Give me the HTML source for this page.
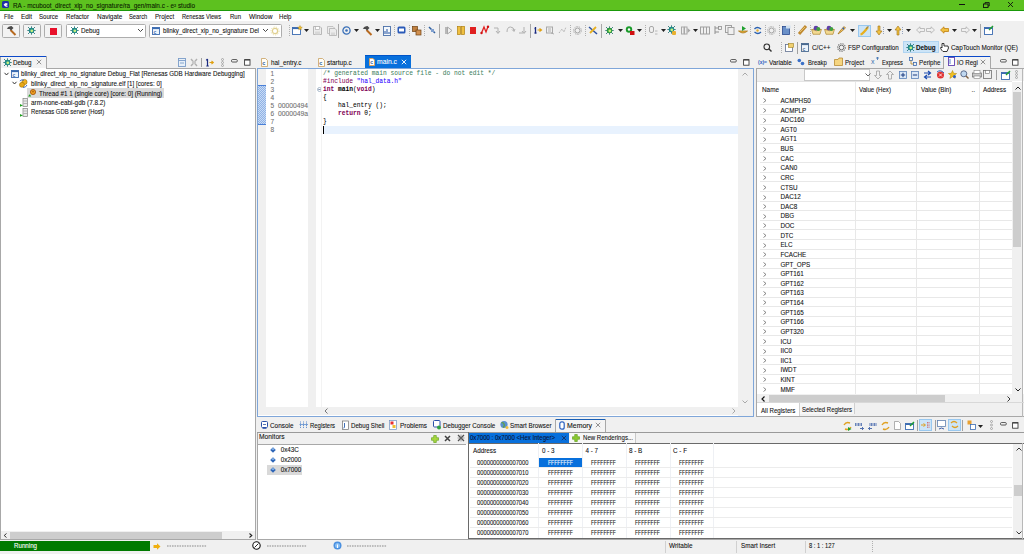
<!DOCTYPE html>
<html><head><meta charset="utf-8"><style>
html,body{margin:0;padding:0;}
body{width:1024px;height:554px;overflow:hidden;position:relative;background:#f0f0f0;font-family:'Liberation Sans', sans-serif;}
.a{position:absolute;}
.t{position:absolute;white-space:pre;-webkit-text-stroke-width:0.08px;line-height:10px;height:10px;}
svg.a{overflow:visible;}
</style></head><body>
<div class="a" style="left:0px;top:0px;width:1024px;height:10px;background:#5dc11f;"></div><div class="a" style="left:0px;top:10px;width:1024px;height:1px;background:#1a9a0a;"></div><div class="a" style="left:0px;top:11px;width:1024px;height:10px;background:#ffffff;"></div><div class="a" style="left:2px;top:1px;width:7px;height:7px;background:#1f2fa8;border-radius:1.5px;"></div><svg class="a" style="left:2px;top:1px" width="7" height="7" viewBox="0 0 7 7"><path d="M2 4 Q3.5 2 5 3 L3 4.5 Q4 5.5 5.5 5" stroke="#fff" stroke-width="1.1" fill="none"/></svg><div class="t" style="left:13px;top:0.7000000000000002px;font-size:6.3px;color:#0a1a00;transform:scaleX(1.0112);transform-origin:0 50%;">RA - mcuboot_direct_xip_no_signature/ra_gen/main.c - e² studio</div><div class="a" style="left:959px;top:4px;width:6px;height:1px;background:#111;"></div><svg class="a" style="left:982px;top:1px" width="9" height="8" viewBox="0 0 9 8"><rect x="1.5" y="3" width="4.5" height="3.5" fill="none" stroke="#111" stroke-width="0.9"/><path d="M3 3 V1.6 H7.2 V5 H6" fill="none" stroke="#111" stroke-width="0.9"/></svg><svg class="a" style="left:1007px;top:1px" width="7" height="7" viewBox="0 0 7 7"><path d="M1 1 L6 6 M6 1 L1 6" stroke="#111" stroke-width="0.9"/></svg><div class="t" style="left:4px;top:11.8px;font-size:6.3px;color:#111;transform:scaleX(0.9260);transform-origin:0 50%;">File</div><div class="t" style="left:20.5px;top:11.8px;font-size:6.3px;color:#111;transform:scaleX(1.0133);transform-origin:0 50%;">Edit</div><div class="t" style="left:38.8px;top:11.8px;font-size:6.3px;color:#111;transform:scaleX(0.9619);transform-origin:0 50%;">Source</div><div class="t" style="left:65.9px;top:11.8px;font-size:6.3px;color:#111;transform:scaleX(0.9661);transform-origin:0 50%;">Refactor</div><div class="t" style="left:96.6px;top:11.8px;font-size:6.3px;color:#111;transform:scaleX(1.0216);transform-origin:0 50%;">Navigate</div><div class="t" style="left:128.8px;top:11.8px;font-size:6.3px;color:#111;transform:scaleX(0.9118);transform-origin:0 50%;">Search</div><div class="t" style="left:155px;top:11.8px;font-size:6.3px;color:#111;transform:scaleX(0.9742);transform-origin:0 50%;">Project</div><div class="t" style="left:182px;top:11.8px;font-size:6.3px;color:#111;transform:scaleX(0.9006);transform-origin:0 50%;">Renesas Views</div><div class="t" style="left:230px;top:11.8px;font-size:6.3px;color:#111;transform:scaleX(0.9518);transform-origin:0 50%;">Run</div><div class="t" style="left:249px;top:11.8px;font-size:6.3px;color:#111;transform:scaleX(1.0443);transform-origin:0 50%;">Window</div><div class="t" style="left:279px;top:11.8px;font-size:6.3px;color:#111;transform:scaleX(0.9648);transform-origin:0 50%;">Help</div><div class="a" style="left:2px;top:24px;width:18px;height:14px;background:#f3f3f3;border:1px solid #adadad;box-sizing:border-box;border-radius:1.5px;"></div><div class="a" style="left:23px;top:24px;width:18px;height:14px;background:#f3f3f3;border:1px solid #adadad;box-sizing:border-box;border-radius:1.5px;"></div><div class="a" style="left:44px;top:24px;width:18px;height:14px;background:#f3f3f3;border:1px solid #adadad;box-sizing:border-box;border-radius:1.5px;"></div><svg class="a" style="left:6px;top:25px" width="11" height="11" viewBox="0 0 11 11"><path d="M4.5 5 L9.5 10" stroke="#b86a20" stroke-width="2"/><path d="M0.8 3.5 Q2.5 0.8 5.5 1 L7.5 3 L5 5.5 L3.5 4 Q2 4 0.8 3.5 Z" fill="#4a4a4a"/></svg><svg class="a" style="left:27px;top:26px" width="9" height="9" viewBox="0 0 9 9"><path d="M1 1 L3 3 M8 1 L6 3 M1 8 L3 6 M8 8 L6 6 M0.3 4.5 H2 M7 4.5 H8.7 M4.5 0.3 V2 M4.5 7 V8.7" stroke="#1a6a6a" stroke-width="0.8"/><circle cx="4.5" cy="4.5" r="2.7" fill="#1f8a8a"/><circle cx="4.8" cy="4.8" r="1.4" fill="#c8f080"/></svg><div class="a" style="left:50px;top:28px;width:6.5px;height:6.5px;background:#e8102a;"></div><div class="a" style="left:66px;top:24px;width:80px;height:14px;background:#fff;border:1px solid #adadad;box-sizing:border-box;border-radius:1.5px;"></div><svg class="a" style="left:70px;top:26px" width="9" height="9" viewBox="0 0 9 9"><path d="M1 1 L3 3 M8 1 L6 3 M1 8 L3 6 M8 8 L6 6 M0.3 4.5 H2 M7 4.5 H8.7 M4.5 0.3 V2 M4.5 7 V8.7" stroke="#1a6a6a" stroke-width="0.8"/><circle cx="4.5" cy="4.5" r="2.7" fill="#1f8a8a"/><circle cx="4.8" cy="4.8" r="1.4" fill="#c8f080"/></svg><div class="t" style="left:81px;top:26px;font-size:6.3px;color:#111;">Debug</div><svg class="a" style="left:137px;top:28px" width="7" height="5" viewBox="0 0 7 5"><path d="M1 1 L3.5 3.5 L6 1" stroke="#333" stroke-width="0.9" fill="none"/></svg><div class="a" style="left:149px;top:24px;width:133px;height:14px;background:#fff;border:1px solid #adadad;box-sizing:border-box;border-radius:1.5px;"></div><svg class="a" style="left:152px;top:27px" width="8" height="8" viewBox="0 0 8 8"><rect x="0.5" y="0.5" width="7" height="7" fill="#eef4fb" stroke="#3a6ab0" stroke-width="0.9"/><rect x="0.5" y="0.5" width="7" height="1.6" fill="#3a6ab0"/><text x="1.6" y="6.5" font-size="5" font-family="Liberation Sans" fill="#3a6ab0" font-weight="bold">c</text></svg><div class="t" style="left:163px;top:26px;font-size:6.3px;color:#111;transform:scaleX(0.9826);transform-origin:0 50%;">blinky_direct_xip_no_signature Del</div><svg class="a" style="left:262px;top:28px" width="7" height="5" viewBox="0 0 7 5"><path d="M1 1 L3.5 3.5 L6 1" stroke="#333" stroke-width="0.9" fill="none"/></svg><svg class="a" style="left:270px;top:26px" width="10" height="10" viewBox="0 0 10 10"><circle cx="5" cy="5" r="2.6" fill="none" stroke="#e0d090" stroke-width="1.2"/><circle cx="5" cy="5" r="4" fill="none" stroke="#e8dca0" stroke-width="1" stroke-dasharray="1.2 1.2"/></svg><svg class="a" style="left:289px;top:25px" width="1" height="12" viewBox="0 0 1 12"><line x1="0.5" y1="0" x2="0.5" y2="12" stroke="#b0b0b0" stroke-width="1" stroke-dasharray="1 1"/></svg><svg class="a" style="left:292px;top:25px" width="11" height="11" viewBox="0 0 11 11"><rect x="0.5" y="2.5" width="8" height="7" fill="#fff" stroke="#3a6ab0" stroke-width="0.9"/><rect x="0.5" y="2.5" width="8" height="1.6" fill="#3a6ab0"/><path d="M8 0.5 L8.7 2 L10.3 2.3 L9 3.3 L9.3 4.8 L8 4 L6.7 4.8 L7 3.3 L5.7 2.3 L7.3 2 Z" fill="#f0c030" stroke="#b08010" stroke-width="0.4"/></svg><svg class="a" style="left:304px;top:29px" width="5" height="3" viewBox="0 0 5 3"><path d="M0 0 H5 L2.5 3 Z" fill="#222"/></svg><svg class="a" style="left:313px;top:26px" width="9" height="9" viewBox="0 0 9 9"><path d="M0.5 0.5 H7 L8.5 2 V8.5 H0.5 Z" fill="#ececec" stroke="#b0b0b0" stroke-width="0.9"/><rect x="2.5" y="0.5" width="4" height="3" fill="#fff" stroke="#b0b0b0" stroke-width="0.7"/><rect x="2" y="5.5" width="5" height="3" fill="#d8d8d8"/></svg><svg class="a" style="left:327px;top:26px" width="10" height="10" viewBox="0 0 10 10"><path d="M0.5 0.5 H6 L7.5 2 V7.5 H0.5 Z" fill="#ececec" stroke="#b8b8b8" stroke-width="0.8"/><path d="M2.5 2.5 H8 L9.5 4 V9.5 H2.5 Z" fill="#ececec" stroke="#b0b0b0" stroke-width="0.8"/><rect x="4" y="6.5" width="4" height="2.5" fill="#d8d8d8"/></svg><div class="a" style="left:338px;top:24px;width:1px;height:14px;background:#a8a8a8;"></div><svg class="a" style="left:342px;top:26px" width="9" height="9" viewBox="0 0 9 9"><circle cx="4.5" cy="4.5" r="3.6" fill="none" stroke="#3a70b8" stroke-width="1.3"/><circle cx="4.5" cy="4.5" r="1.3" fill="#3a70b8"/></svg><svg class="a" style="left:354px;top:29px" width="5" height="3" viewBox="0 0 5 3"><path d="M0 0 H5 L2.5 3 Z" fill="#222"/></svg><svg class="a" style="left:362px;top:25px" width="11" height="11" viewBox="0 0 11 11"><path d="M4.5 5 L9.5 10" stroke="#b86a20" stroke-width="2"/><path d="M0.8 3.5 Q2.5 0.8 5.5 1 L7.5 3 L5 5.5 L3.5 4 Q2 4 0.8 3.5 Z" fill="#4a4a4a"/></svg><svg class="a" style="left:375px;top:29px" width="5" height="3" viewBox="0 0 5 3"><path d="M0 0 H5 L2.5 3 Z" fill="#222"/></svg><svg class="a" style="left:383px;top:26px" width="8" height="10" viewBox="0 0 8 10"><rect x="0.5" y="0.5" width="7" height="9" fill="#f4f8fc" stroke="#4a70a8" stroke-width="0.9"/><path d="M2 8 V5 M4 8 V3 M6 8 V6" stroke="#2050a0" stroke-width="1"/></svg><svg class="a" style="left:394px;top:25px" width="1" height="12" viewBox="0 0 1 12"><line x1="0.5" y1="0" x2="0.5" y2="12" stroke="#b0b0b0" stroke-width="1" stroke-dasharray="1 1"/></svg><svg class="a" style="left:397px;top:26px" width="9" height="9" viewBox="0 0 9 9"><rect x="0.5" y="0.5" width="8" height="7" rx="1.5" fill="#2a5ab8"/><rect x="2" y="2.5" width="5" height="3" fill="#fff"/></svg><svg class="a" style="left:409px;top:25px" width="1" height="12" viewBox="0 0 1 12"><line x1="0.5" y1="0" x2="0.5" y2="12" stroke="#b0b0b0" stroke-width="1" stroke-dasharray="1 1"/></svg><svg class="a" style="left:412px;top:26px" width="10" height="10" viewBox="0 0 10 10"><rect x="0.5" y="0.5" width="5" height="5" fill="#c08040" stroke="#704010" stroke-width="0.7"/><rect x="4" y="4" width="5" height="5" fill="#d09050" stroke="#704010" stroke-width="0.7"/></svg><svg class="a" style="left:424px;top:25px" width="1" height="12" viewBox="0 0 1 12"><line x1="0.5" y1="0" x2="0.5" y2="12" stroke="#b0b0b0" stroke-width="1" stroke-dasharray="1 1"/></svg><svg class="a" style="left:428px;top:26px" width="8" height="9" viewBox="0 0 8 9"><path d="M1 1 L7 7" stroke="#3060a0" stroke-width="1.5"/><rect x="3" y="3" width="3" height="3" fill="#80a0d0"/></svg><div class="a" style="left:439px;top:24px;width:1px;height:14px;background:#a8a8a8;"></div><svg class="a" style="left:444px;top:26px" width="9" height="9" viewBox="0 0 9 9"><path d="M1 1 H3 V8 H1 Z" fill="#b8b8b8"/><path d="M3.5 1 L8 4.5 L3.5 8 Z" fill="none" stroke="#a8a8a8" stroke-width="1"/></svg><svg class="a" style="left:457px;top:26px" width="8" height="9" viewBox="0 0 8 9"><rect x="0.5" y="0.5" width="3" height="8" fill="#f0c040" stroke="#b08010" stroke-width="0.7"/><rect x="4.5" y="0.5" width="3" height="8" fill="#f0c040" stroke="#b08010" stroke-width="0.7"/></svg><div class="a" style="left:470px;top:27px;width:6px;height:7px;background:#e02020;"></div><svg class="a" style="left:480px;top:25px" width="9" height="10" viewBox="0 0 9 10"><path d="M1.5 8 L4 2 L6 7 L8 1.5" stroke="#e02020" stroke-width="1.3" fill="none"/><circle cx="1.5" cy="8" r="1.2" fill="#d01010"/><circle cx="8" cy="1.8" r="1.2" fill="#d01010"/></svg><svg class="a" style="left:493px;top:26px" width="8" height="9" viewBox="0 0 8 9"><path d="M1 2 H5 V7 M3 5 L5 7.5 L7 5" stroke="#b0b0b0" stroke-width="1" fill="none"/></svg><svg class="a" style="left:506px;top:26px" width="8" height="9" viewBox="0 0 8 9"><path d="M1 6 Q1 1 4.5 1 Q8 1 8 5 M6 3.5 L8 5.5 L9 3" stroke="#b0b0b0" stroke-width="1" fill="none"/></svg><svg class="a" style="left:518px;top:26px" width="8" height="9" viewBox="0 0 8 9"><path d="M1 7 H5 M6 1 V7 M4 5 L6 7.5 L8 5" stroke="#b0b0b0" stroke-width="1" fill="none"/></svg><div class="a" style="left:530px;top:24px;width:1px;height:14px;background:#a8a8a8;"></div><svg class="a" style="left:533px;top:25px" width="10" height="10" viewBox="0 0 10 10"><path d="M2.5 2 V8 M1.5 8 H3.5 M1.5 3.5 H2.5" stroke="#1a2a80" stroke-width="1.3"/><path d="M4.5 5 H8 M6.5 3.5 L8.5 5 L6.5 6.5" stroke="#e0a010" stroke-width="1.2" fill="none"/></svg><svg class="a" style="left:546px;top:26px" width="9" height="9" viewBox="0 0 9 9"><rect x="0.5" y="1" width="6" height="6" fill="none" stroke="#a8a8a8"/><path d="M2 3 H5 M2 5 H5 M5 7 L8 8" stroke="#a8a8a8" stroke-width="0.9"/></svg><svg class="a" style="left:558px;top:26px" width="9" height="9" viewBox="0 0 9 9"><path d="M1 7 L4 3 L6 6 L8 1" stroke="#b0b0b0" stroke-width="1" fill="none" stroke-dasharray="1.2 0.8"/></svg><svg class="a" style="left:570px;top:25px" width="1" height="12" viewBox="0 0 1 12"><line x1="0.5" y1="0" x2="0.5" y2="12" stroke="#b0b0b0" stroke-width="1" stroke-dasharray="1 1"/></svg><svg class="a" style="left:573px;top:26px" width="9" height="9" viewBox="0 0 9 9"><circle cx="4.5" cy="4.5" r="2.5" fill="none" stroke="#a0a0a0" stroke-width="1"/><circle cx="4.5" cy="4.5" r="3.9" fill="none" stroke="#a0a0a0" stroke-width="1" stroke-dasharray="1.2 1.2"/></svg><svg class="a" style="left:585px;top:25px" width="1" height="12" viewBox="0 0 1 12"><line x1="0.5" y1="0" x2="0.5" y2="12" stroke="#b0b0b0" stroke-width="1" stroke-dasharray="1 1"/></svg><svg class="a" style="left:588px;top:25px" width="10" height="11" viewBox="0 0 10 11"><path d="M1 2 L9 9" stroke="#2a50a0" stroke-width="1.5"/><path d="M2 8 L8 2" stroke="#e8b020" stroke-width="1.8"/></svg><div class="a" style="left:601px;top:24px;width:1px;height:14px;background:#a8a8a8;"></div><svg class="a" style="left:605px;top:26px" width="9" height="9" viewBox="0 0 9 9"><path d="M1 1 L3 3 M8 1 L6 3 M1 8 L3 6 M8 8 L6 6 M0.3 4.5 H2 M7 4.5 H8.7 M4.5 0.3 V2 M4.5 7 V8.7" stroke="#1a6a6a" stroke-width="0.8"/><circle cx="4.5" cy="4.5" r="2.7" fill="#2a9a3a"/><circle cx="4.8" cy="4.8" r="1.4" fill="#c8f080"/></svg><svg class="a" style="left:618px;top:29px" width="5" height="3" viewBox="0 0 5 3"><path d="M0 0 H5 L2.5 3 Z" fill="#222"/></svg><svg class="a" style="left:625px;top:25px" width="10" height="11" viewBox="0 0 10 11"><circle cx="4" cy="4.5" r="3.2" fill="#1a9a2a"/><circle cx="4" cy="4.5" r="1.2" fill="#fff"/><rect x="5" y="6" width="4.5" height="4" fill="#d01010"/></svg><svg class="a" style="left:637px;top:29px" width="5" height="3" viewBox="0 0 5 3"><path d="M0 0 H5 L2.5 3 Z" fill="#222"/></svg><svg class="a" style="left:645px;top:25px" width="1" height="12" viewBox="0 0 1 12"><line x1="0.5" y1="0" x2="0.5" y2="12" stroke="#b0b0b0" stroke-width="1" stroke-dasharray="1 1"/></svg><svg class="a" style="left:649px;top:26px" width="9" height="9" viewBox="0 0 9 9"><rect x="0.5" y="0.5" width="4" height="6" rx="1.5" fill="none" stroke="#a8a8a8"/><path d="M6 5 H8.5 M6 8 H8.5" stroke="#a8a8a8" stroke-width="0.8"/></svg><svg class="a" style="left:661px;top:29px" width="5" height="3" viewBox="0 0 5 3"><path d="M0 0 H5 L2.5 3 Z" fill="#222"/></svg><svg class="a" style="left:667px;top:25px" width="9" height="9" viewBox="0 0 9 9"><path d="M1 1 L3 3 M8 1 L6 3 M1 8 L3 6 M8 8 L6 6 M0.3 4.5 H2 M7 4.5 H8.7 M4.5 0.3 V2 M4.5 7 V8.7" stroke="#1a6a6a" stroke-width="0.8"/><circle cx="4.5" cy="4.5" r="2.7" fill="#1f8a8a"/><circle cx="4.8" cy="4.8" r="1.4" fill="#c8f080"/></svg><div class="a" style="left:672px;top:31px;width:4px;height:4px;background:#e8b030;border-radius:1px;"></div><svg class="a" style="left:681px;top:26px" width="10" height="9" viewBox="0 0 10 9"><rect x="0.5" y="1" width="2.5" height="7" fill="none" stroke="#a8a8a8"/><rect x="3.5" y="1" width="2.5" height="7" fill="none" stroke="#a8a8a8"/><path d="M6.5 2 L9.5 4.5 L6.5 7 Z" fill="#a8a8a8"/></svg><svg class="a" style="left:693px;top:29px" width="5" height="3" viewBox="0 0 5 3"><path d="M0 0 H5 L2.5 3 Z" fill="#222"/></svg><svg class="a" style="left:700px;top:26px" width="10" height="9" viewBox="0 0 10 9"><rect x="0.5" y="1" width="9" height="7" fill="none" stroke="#a0a0a0"/><path d="M3.5 1 V8 M6.5 1 V8" stroke="#a0a0a0"/></svg><svg class="a" style="left:713px;top:25px" width="9" height="10" viewBox="0 0 9 10"><path d="M2 1 V9 M2 3 H6 M2 7 H6" stroke="#909090" stroke-width="1" fill="none"/><rect x="5.5" y="1.5" width="3" height="3" fill="none" stroke="#909090" stroke-width="0.8"/></svg><svg class="a" style="left:725px;top:25px" width="10" height="10" viewBox="0 0 10 10"><rect x="0.5" y="0.5" width="6" height="7" fill="none" stroke="#a0a0a0"/><rect x="3" y="2.5" width="6" height="7" fill="#f0f0f0" stroke="#a0a0a0"/></svg><svg class="a" style="left:738px;top:25px" width="10" height="10" viewBox="0 0 10 10"><path d="M0.5 6 Q5 10 9.5 6 Z" fill="#e8b040" stroke="#a07010" stroke-width="0.7"/><path d="M4 1 L8 3.5 L4 6 Z" fill="#20a030"/></svg><svg class="a" style="left:750px;top:25px" width="1" height="12" viewBox="0 0 1 12"><line x1="0.5" y1="0" x2="0.5" y2="12" stroke="#b0b0b0" stroke-width="1" stroke-dasharray="1 1"/></svg><svg class="a" style="left:753px;top:26px" width="9" height="9" viewBox="0 0 9 9"><path d="M1.5 3 Q4 0 8 3 M8 6 Q5 9 1.5 6" stroke="#2a60b0" stroke-width="1.3" fill="none"/><circle cx="4.5" cy="4.5" r="1.2" fill="#e8b030"/></svg><svg class="a" style="left:765px;top:25px" width="1" height="12" viewBox="0 0 1 12"><line x1="0.5" y1="0" x2="0.5" y2="12" stroke="#b0b0b0" stroke-width="1" stroke-dasharray="1 1"/></svg><svg class="a" style="left:767px;top:26px" width="9" height="9" viewBox="0 0 9 9"><circle cx="4.5" cy="4.5" r="2.5" fill="none" stroke="#a0a0a0" stroke-width="1"/><circle cx="4.5" cy="4.5" r="3.9" fill="none" stroke="#a0a0a0" stroke-width="1" stroke-dasharray="1.2 1.2"/></svg><svg class="a" style="left:779px;top:25px" width="1" height="12" viewBox="0 0 1 12"><line x1="0.5" y1="0" x2="0.5" y2="12" stroke="#b0b0b0" stroke-width="1" stroke-dasharray="1 1"/></svg><svg class="a" style="left:782px;top:25px" width="9" height="10" viewBox="0 0 9 10"><rect x="0.5" y="1.5" width="7" height="8" fill="#6a90c8" stroke="#2a4a90" stroke-width="0.8"/><rect x="4" y="0.5" width="4.5" height="3" fill="#d0e0f0"/></svg><svg class="a" style="left:794px;top:25px" width="1" height="12" viewBox="0 0 1 12"><line x1="0.5" y1="0" x2="0.5" y2="12" stroke="#b0b0b0" stroke-width="1" stroke-dasharray="1 1"/></svg><svg class="a" style="left:798px;top:25px" width="9" height="10" viewBox="0 0 9 10"><path d="M1 9 L8 1" stroke="#c08a30" stroke-width="3"/><path d="M2 7 L7 2" stroke="#f0d080" stroke-width="0.8"/></svg><svg class="a" style="left:810px;top:25px" width="1" height="12" viewBox="0 0 1 12"><line x1="0.5" y1="0" x2="0.5" y2="12" stroke="#b0b0b0" stroke-width="1" stroke-dasharray="1 1"/></svg><svg class="a" style="left:811px;top:25px" width="11" height="10" viewBox="0 0 11 10"><path d="M0.6 4.5 H10.4 L9 9.3 H2 Z" fill="#f2d890" stroke="#b08830" stroke-width="0.7"/><path d="M0.6 4.5 Q5.5 7 10.4 4.5" fill="none" stroke="#b08830" stroke-width="0.6"/><circle cx="5" cy="3.2" r="2.4" fill="#6040a8"/><circle cx="7.3" cy="4" r="2" fill="#40a040"/></svg><svg class="a" style="left:824px;top:25px" width="11" height="10" viewBox="0 0 11 10"><path d="M0.6 4.5 H10.4 L9 9.3 H2 Z" fill="#f2d890" stroke="#b08830" stroke-width="0.7"/><path d="M0.6 4.5 Q5.5 7 10.4 4.5" fill="none" stroke="#b08830" stroke-width="0.6"/><circle cx="5" cy="3.2" r="2.4" fill="#6040a8"/><circle cx="7.3" cy="4" r="2" fill="#40a040"/></svg><svg class="a" style="left:837px;top:25px" width="10" height="10" viewBox="0 0 10 10"><path d="M1 9 L3 6 L7 1.5 L8.5 3 L4 7 Z" fill="#f0c060" stroke="#a07010" stroke-width="0.7"/><circle cx="6.3" cy="3.5" r="0.9" fill="#3060c0"/></svg><svg class="a" style="left:850px;top:29px" width="5" height="3" viewBox="0 0 5 3"><path d="M0 0 H5 L2.5 3 Z" fill="#222"/></svg><div class="a" style="left:858px;top:25px;width:13px;height:12px;background:#cce4f7;border:1px solid #99c8ef;box-sizing:border-box;"></div><svg class="a" style="left:859px;top:25px" width="11" height="11" viewBox="0 0 11 11"><path d="M1.5 9.5 Q4 9 9 2" stroke="#e8b020" stroke-width="2.2" fill="none"/><path d="M7 4 L9.5 1" stroke="#707070" stroke-width="0.8"/></svg><svg class="a" style="left:875px;top:25px" width="10" height="11" viewBox="0 0 10 11"><path d="M3 1 V6 H1 L4 10 L7 6 H5 V1 Z" fill="#f0c040" stroke="#a07010" stroke-width="0.6"/><path d="M8.5 2 V9" stroke="#8090b0" stroke-width="0.8" stroke-dasharray="1 1"/></svg><svg class="a" style="left:887px;top:29px" width="5" height="3" viewBox="0 0 5 3"><path d="M0 0 H5 L2.5 3 Z" fill="#222"/></svg><svg class="a" style="left:894px;top:25px" width="10" height="11" viewBox="0 0 10 11"><path d="M3 10 V5 H1 L4 1 L7 5 H5 V10 Z" fill="#f0c040" stroke="#a07010" stroke-width="0.6"/><path d="M8.5 2 V9" stroke="#8090b0" stroke-width="0.8" stroke-dasharray="1 1"/></svg><svg class="a" style="left:906px;top:29px" width="5" height="3" viewBox="0 0 5 3"><path d="M0 0 H5 L2.5 3 Z" fill="#222"/></svg><svg class="a" style="left:916px;top:26px" width="9" height="8" viewBox="0 0 9 8"><path d="M0.5 4 L4 0.8 V2.5 H8.5 V5.5 H4 V7.2 Z" fill="#f0f0f0" stroke="#b0b0b0" stroke-width="0.8"/></svg><svg class="a" style="left:926px;top:26px" width="9" height="8" viewBox="0 0 9 8"><path d="M8.5 4 L5 0.8 V2.5 H0.5 V5.5 H5 V7.2 Z" fill="#f0f0f0" stroke="#b0b0b0" stroke-width="0.8"/></svg><svg class="a" style="left:940px;top:26px" width="9" height="8" viewBox="0 0 9 8"><path d="M0.5 4 L4 0.8 V2.5 H8.5 V5.5 H4 V7.2 Z" fill="#f0c040" stroke="#c08010" stroke-width="0.8"/></svg><svg class="a" style="left:952px;top:29px" width="5" height="3" viewBox="0 0 5 3"><path d="M0 0 H5 L2.5 3 Z" fill="#222"/></svg><svg class="a" style="left:961px;top:26px" width="9" height="8" viewBox="0 0 9 8"><path d="M8.5 4 L5 0.8 V2.5 H0.5 V5.5 H5 V7.2 Z" fill="#f0f0f0" stroke="#b0b0b0" stroke-width="0.8"/></svg><svg class="a" style="left:972px;top:29px" width="5" height="3" viewBox="0 0 5 3"><path d="M0 0 H5 L2.5 3 Z" fill="#222"/></svg><div class="a" style="left:980px;top:24px;width:1px;height:14px;background:#a8a8a8;"></div><svg class="a" style="left:984px;top:25px" width="10" height="10" viewBox="0 0 10 10"><rect x="0.5" y="2.5" width="8" height="7" fill="#fff" stroke="#3a6ab0" stroke-width="0.9"/><rect x="0.5" y="2.5" width="8" height="1.5" fill="#3a6ab0"/><path d="M5 5 L9 1" stroke="#20a030" stroke-width="1.4"/></svg><svg class="a" style="left:763px;top:43px" width="9" height="9" viewBox="0 0 9 9"><circle cx="3.8" cy="3.8" r="2.8" fill="none" stroke="#333" stroke-width="1.1"/><path d="M5.8 5.8 L8.5 8.5" stroke="#333" stroke-width="1.4"/></svg><svg class="a" style="left:781px;top:42px" width="1" height="11" viewBox="0 0 1 11"><line x1="0.5" y1="0" x2="0.5" y2="11" stroke="#b0b0b0" stroke-width="1" stroke-dasharray="1 1"/></svg><svg class="a" style="left:785px;top:43px" width="9" height="9" viewBox="0 0 9 9"><rect x="0.5" y="1.5" width="7" height="7" fill="#fff" stroke="#607090" stroke-width="0.8"/><rect x="3.5" y="0.5" width="5" height="4" fill="#f0d070" stroke="#a08020" stroke-width="0.6"/></svg><div class="a" style="left:797px;top:42px;width:1px;height:12px;background:#a0a0a0;"></div><svg class="a" style="left:801px;top:43px" width="8" height="9" viewBox="0 0 8 9"><rect x="0.5" y="0.5" width="7" height="8" fill="#eef4fb" stroke="#4a6a90" stroke-width="0.9"/><rect x="0.5" y="0.5" width="7" height="1.6" fill="#4a6a90"/><text x="1.6" y="7.5" font-size="5" font-family="Liberation Sans" fill="#4a6a90" font-weight="bold">c</text></svg><div class="t" style="left:811.5px;top:42.5px;font-size:6.3px;color:#111;transform:scaleX(1.0160);transform-origin:0 50%;">C/C++</div><svg class="a" style="left:837px;top:43px" width="9" height="9" viewBox="0 0 9 9"><circle cx="4.5" cy="4.5" r="2.3" fill="none" stroke="#707070" stroke-width="1"/><circle cx="4.5" cy="4.5" r="3.8" fill="none" stroke="#707070" stroke-width="1.1" stroke-dasharray="1.3 1"/></svg><div class="t" style="left:847.7px;top:42.5px;font-size:6.3px;color:#111;transform:scaleX(0.9891);transform-origin:0 50%;">FSP Configuration</div><div class="a" style="left:903px;top:41px;width:36px;height:12px;background:#cce4f7;border:1px solid #b0d4f1;box-sizing:border-box;"></div><svg class="a" style="left:905.5px;top:43px" width="9" height="9" viewBox="0 0 9 9"><path d="M1 1 L3 3 M8 1 L6 3 M1 8 L3 6 M8 8 L6 6 M0.3 4.5 H2 M7 4.5 H8.7 M4.5 0.3 V2 M4.5 7 V8.7" stroke="#1a6a6a" stroke-width="0.8"/><circle cx="4.5" cy="4.5" r="2.7" fill="#1f8a8a"/><circle cx="4.8" cy="4.8" r="1.4" fill="#c8f080"/></svg><div class="t" style="left:916px;top:42.5px;font-size:6.3px;color:#111;font-weight:bold;">Debug</div><svg class="a" style="left:940px;top:42px" width="9" height="10" viewBox="0 0 9 10"><path d="M2 1.5 L2 6 L1 5 Q0 6 1.5 8 L3 9.5 H7 L8.5 6 L8 4 L4 4 V1.5 Z" fill="#fff" stroke="#222" stroke-width="0.9"/></svg><div class="t" style="left:950.7px;top:42.5px;font-size:6.3px;color:#111;transform:scaleX(1.0110);transform-origin:0 50%;">CapTouch Monitor (QE)</div><div class="a" style="left:0px;top:68px;width:256px;height:472px;background:#fff;"></div><div class="a" style="left:0px;top:56px;width:1px;height:484px;background:#a8a8a8;"></div><div class="a" style="left:255px;top:68px;width:1px;height:472px;background:#a8a8a8;"></div><div class="a" style="left:46px;top:68px;width:210px;height:1px;background:#a8a8a8;"></div><div class="a" style="left:1px;top:57px;width:45px;height:11px;background:#f2f2f2;"></div><div class="a" style="left:0px;top:56px;width:47px;height:1px;background:#0b49c9;"></div><div class="a" style="left:46px;top:56px;width:1px;height:13px;background:#a8a8a8;"></div><svg class="a" style="left:3px;top:58px" width="9" height="9" viewBox="0 0 9 9"><path d="M1 1 L3 3 M8 1 L6 3 M1 8 L3 6 M8 8 L6 6 M0.3 4.5 H2 M7 4.5 H8.7 M4.5 0.3 V2 M4.5 7 V8.7" stroke="#1a6a6a" stroke-width="0.8"/><circle cx="4.5" cy="4.5" r="2.7" fill="#1f8a8a"/><circle cx="4.8" cy="4.8" r="1.4" fill="#c8f080"/></svg><div class="t" style="left:13px;top:57.5px;font-size:6.3px;color:#111;">Debug</div><svg class="a" style="left:36px;top:59px" width="6" height="6" viewBox="0 0 6 6"><path d="M0.8 0.8 L5.2 5.2 M5.2 0.8 L0.8 5.2" stroke="#777" stroke-width="0.8"/></svg><svg class="a" style="left:178px;top:58px" width="8" height="9" viewBox="0 0 8 9"><rect x="0.5" y="0.5" width="7" height="8" fill="#e8f0f8" stroke="#7a9cc8" stroke-width="0.9"/><path d="M0.5 2.5 H7.5 M2 5 H6" stroke="#7a9cc8" stroke-width="0.9"/></svg><svg class="a" style="left:190px;top:58px" width="8" height="9" viewBox="0 0 8 9"><path d="M1 1 L7 8 M7 1 L1 8" stroke="#b0b0b0" stroke-width="1.4"/><rect x="2" y="3" width="4" height="3" fill="#c8c8c8"/></svg><div class="a" style="left:201px;top:58px;width:1px;height:9px;background:#a0a0a0;"></div><svg class="a" style="left:205px;top:58px" width="10" height="9" viewBox="0 0 10 9"><path d="M2.5 1 V8 M1.3 8 H3.8 M1.2 2.3 L2.5 1" stroke="#1a2a80" stroke-width="1.2"/><path d="M4.5 4.5 H8 M6.5 3 L8.3 4.5 L6.5 6" stroke="#e0a010" stroke-width="1.1" fill="none"/></svg><svg class="a" style="left:221px;top:58px" width="3" height="9" viewBox="0 0 3 9"><circle cx="1.5" cy="1.5" r="1" fill="none" stroke="#909090" stroke-width="0.7"/><circle cx="1.5" cy="4.5" r="1" fill="none" stroke="#909090" stroke-width="0.7"/><circle cx="1.5" cy="7.5" r="1" fill="none" stroke="#909090" stroke-width="0.7"/></svg><svg class="a" style="left:231px;top:58.5px" width="7" height="4" viewBox="0 0 7 4"><rect x="0.5" y="0.6" width="5.8" height="2.4" rx="1" fill="#fff" stroke="#333" stroke-width="0.85"/></svg><svg class="a" style="left:244px;top:58.5px" width="7" height="7" viewBox="0 0 7 7"><rect x="0.6" y="0.6" width="5.4" height="5.6" fill="#fff" stroke="#333" stroke-width="0.85"/><rect x="0.6" y="0.6" width="5.4" height="0.9" fill="#333"/></svg><svg class="a" style="left:4px;top:72px" width="5" height="4" viewBox="0 0 5 4"><path d="M0.5 0.8 L2.5 3 L4.5 0.8" stroke="#222" stroke-width="0.9" fill="none"/></svg><svg class="a" style="left:11px;top:70px" width="8" height="8" viewBox="0 0 8 8"><rect x="0.5" y="0.5" width="7" height="7" fill="#eef4fb" stroke="#3a6ab0" stroke-width="0.9"/><rect x="0.5" y="0.5" width="7" height="1.6" fill="#3a6ab0"/><text x="1.6" y="6.5" font-size="5" font-family="Liberation Sans" fill="#3a6ab0" font-weight="bold">c</text></svg><div class="t" style="left:21.3px;top:69.2px;font-size:6.3px;color:#111;transform:scaleX(0.9830);transform-origin:0 50%;">blinky_direct_xip_no_signature Debug_Flat [Renesas GDB Hardware Debugging]</div><svg class="a" style="left:12px;top:81px" width="5" height="4" viewBox="0 0 5 4"><path d="M0.5 0.8 L2.5 3 L4.5 0.8" stroke="#222" stroke-width="0.9" fill="none"/></svg><svg class="a" style="left:19px;top:79px" width="9" height="9" viewBox="0 0 9 9"><circle cx="5.5" cy="3" r="2.6" fill="#f0b020" stroke="#a07000" stroke-width="0.6"/><circle cx="3" cy="5.8" r="2.5" fill="#e8a818" stroke="#a07000" stroke-width="0.6"/><path d="M0.8 2 Q3 0 5 1.2 M8 6 Q7 8.5 4 8.5" stroke="#3060c0" stroke-width="0.9" fill="none"/></svg><div class="t" style="left:30.5px;top:78.8px;font-size:6.3px;color:#111;transform:scaleX(0.9957);transform-origin:0 50%;">blinky_direct_xip_no_signature.elf [1] [cores: 0]</div><div class="a" style="left:26.5px;top:88px;width:137px;height:9.5px;background:#d9d9d9;"></div><svg class="a" style="left:27px;top:88px" width="10" height="9" viewBox="0 0 10 9"><circle cx="6" cy="4" r="2.6" fill="#f0a020" stroke="#904000" stroke-width="0.7"/><path d="M6 2.8 V4.3" stroke="#602000" stroke-width="0.8"/><path d="M1 8.5 L3 6 L4 8.5 Z" fill="#20a020"/></svg><div class="t" style="left:39.3px;top:88.5px;font-size:6.3px;color:#111;transform:scaleX(0.9915);transform-origin:0 50%;">Thread #1 1 (single core) [core: 0] (Running)</div><svg class="a" style="left:20px;top:98px" width="8" height="9" viewBox="0 0 8 9"><rect x="3" y="0.5" width="4.5" height="8" fill="#e8e8e8" stroke="#808080" stroke-width="0.7"/><path d="M3.5 3 H7 M3.5 5.5 H7" stroke="#909090" stroke-width="0.6"/><path d="M0 6 L2.6 7.4 L0 8.8 Z" fill="#20a020"/><path d="M0.2 7.4 H2.4" stroke="#20a020" stroke-width="0.8"/></svg><div class="t" style="left:30.5px;top:98.1px;font-size:6.35px;color:#111;transform:scaleX(1.0052);transform-origin:0 50%;">arm-none-eabi-gdb (7.8.2)</div><svg class="a" style="left:20px;top:107.5px" width="8" height="9" viewBox="0 0 8 9"><rect x="3" y="0.5" width="4.5" height="8" fill="#e8e8e8" stroke="#808080" stroke-width="0.7"/><path d="M3.5 3 H7 M3.5 5.5 H7" stroke="#909090" stroke-width="0.6"/><path d="M0 6 L2.6 7.4 L0 8.8 Z" fill="#20a020"/><path d="M0.2 7.4 H2.4" stroke="#20a020" stroke-width="0.8"/></svg><div class="t" style="left:30.5px;top:107.3px;font-size:6.3px;color:#111;transform:scaleX(0.9341);transform-origin:0 50%;">Renesas GDB server (Host)</div><div class="a" style="left:1px;top:531px;width:254px;height:9px;background:#f0f0f0;"></div><div class="a" style="left:10px;top:532px;width:212px;height:7px;background:#cdcdcd;"></div><svg class="a" style="left:3px;top:533px" width="5" height="5" viewBox="0 0 5 5"><path d="M3.5 0.5 L1.2 2.5 L3.5 4.5" stroke="#222" stroke-width="0.9" fill="none"/></svg><svg class="a" style="left:248px;top:533px" width="5" height="5" viewBox="0 0 5 5"><path d="M1.5 0.5 L3.8 2.5 L1.5 4.5" stroke="#222" stroke-width="1.1" fill="none"/></svg><div class="a" style="left:0px;top:539px;width:256px;height:1px;background:#a8a8a8;"></div><div class="a" style="left:257px;top:68px;width:497px;height:349px;background:#fff;border:1px solid #7fa6d9;box-sizing:border-box;"></div><div class="a" style="left:258px;top:69px;width:8px;height:338px;background:#f0f0f0;"></div><div class="a" style="left:308px;top:69px;width:8px;height:338px;background:#f0f0f0;"></div><svg class="a" style="left:258px;top:85px" width="8" height="40" viewBox="0 0 8 40"><defs><pattern id="dp" width="2" height="2" patternUnits="userSpaceOnUse"><rect width="2" height="2" fill="#c9dbf4"/><rect width="1" height="1" fill="#8fb2e6"/><rect x="1" y="1" width="1" height="1" fill="#8fb2e6"/></pattern></defs><rect width="8" height="40" fill="url(#dp)"/><rect width="8" height="1" fill="#4a80d8"/><rect y="39" width="8" height="1" fill="#4a80d8"/></svg><div class="a" style="left:323px;top:125.5px;width:415px;height:8.5px;background:#e8f2fe;"></div><div class="t" style="left:270.5px;top:69.4px;font-size:6.5px;color:#707070;">1</div><div class="t" style="left:270.5px;top:77.4px;font-size:6.5px;color:#707070;">2</div><div class="t" style="left:270.5px;top:85.4px;font-size:6.5px;color:#707070;">3</div><div class="t" style="left:270.5px;top:93.4px;font-size:6.5px;color:#707070;">4</div><div class="t" style="left:270.5px;top:101.4px;font-size:6.5px;color:#707070;">5</div><div class="t" style="left:270.5px;top:109.4px;font-size:6.5px;color:#707070;">6</div><div class="t" style="left:270.5px;top:117.4px;font-size:6.5px;color:#707070;">7</div><div class="t" style="left:270.5px;top:125.4px;font-size:6.5px;color:#707070;">8</div><div class="t" style="left:277.7px;top:101.4px;font-size:6.5px;color:#707070;transform:scaleX(1.0375);transform-origin:0 50%;">00000494</div><div class="t" style="left:277.7px;top:109.4px;font-size:6.5px;color:#707070;transform:scaleX(1.0375);transform-origin:0 50%;">0000049a</div><svg class="a" style="left:316.5px;top:86.5px" width="5" height="5" viewBox="0 0 5 5"><circle cx="2.5" cy="2.5" r="2" fill="#fff" stroke="#8aa0b8" stroke-width="0.7"/><path d="M1.3 2.5 H3.7" stroke="#506890" stroke-width="0.7"/></svg><div class="t" style="left:322.7px;top:69.4px;font-size:6.5px;font-family:'Liberation Mono', monospace;transform:scaleX(0.96);transform-origin:0 50%;-webkit-text-stroke-width:0.05px;"><span style="color:#3f7f5f;">/* generated main source file - do not edit */</span></div><div class="t" style="left:322.7px;top:77.4px;font-size:6.5px;font-family:'Liberation Mono', monospace;transform:scaleX(0.96);transform-origin:0 50%;-webkit-text-stroke-width:0.05px;"><span style="color:#7f0055;">#include </span><span style="color:#2a00ff;">&quot;hal_data.h&quot;</span></div><div class="t" style="left:322.7px;top:85.4px;font-size:6.5px;font-family:'Liberation Mono', monospace;transform:scaleX(0.96);transform-origin:0 50%;-webkit-text-stroke-width:0.05px;"><span style="color:#7f0055;font-weight:bold;">int</span><span style="color:#000;"> </span><span style="color:#000;font-weight:bold;">main</span><span style="color:#000;">(</span><span style="color:#7f0055;font-weight:bold;">void</span><span style="color:#000;">)</span></div><div class="t" style="left:322.7px;top:93.4px;font-size:6.5px;font-family:'Liberation Mono', monospace;transform:scaleX(0.96);transform-origin:0 50%;-webkit-text-stroke-width:0.05px;"><span style="color:#000;">{</span></div><div class="t" style="left:322.7px;top:101.4px;font-size:6.5px;font-family:'Liberation Mono', monospace;transform:scaleX(0.96);transform-origin:0 50%;-webkit-text-stroke-width:0.05px;"><span style="color:#000;">    hal_entry ();</span></div><div class="t" style="left:322.7px;top:109.4px;font-size:6.5px;font-family:'Liberation Mono', monospace;transform:scaleX(0.96);transform-origin:0 50%;-webkit-text-stroke-width:0.05px;"><span style="color:#000;">    </span><span style="color:#7f0055;font-weight:bold;">return</span><span style="color:#000;"> 0;</span></div><div class="t" style="left:322.7px;top:117.4px;font-size:6.5px;font-family:'Liberation Mono', monospace;transform:scaleX(0.96);transform-origin:0 50%;-webkit-text-stroke-width:0.05px;"><span style="color:#000;">}</span></div><div class="a" style="left:322.5px;top:126px;width:1.2px;height:8px;background:#000;"></div><div class="a" style="left:738px;top:69px;width:15px;height:347px;background:#f0f0f0;"></div><div class="a" style="left:258px;top:407px;width:480px;height:8px;background:#f0f0f0;"></div><svg class="a" style="left:742px;top:72px" width="6" height="4" viewBox="0 0 6 4"><path d="M0.5 3.5 L3 1 L5.5 3.5" stroke="#a0a0a0" stroke-width="0.9" fill="none"/></svg><svg class="a" style="left:742px;top:400px" width="6" height="4" viewBox="0 0 6 4"><path d="M0.5 0.5 L3 3 L5.5 0.5" stroke="#a0a0a0" stroke-width="0.9" fill="none"/></svg><svg class="a" style="left:324px;top:408px" width="4" height="6" viewBox="0 0 4 6"><path d="M3.5 0.5 L1 3 L3.5 5.5" stroke="#777" stroke-width="1" fill="none"/></svg><div class="a" style="left:321px;top:69px;width:1px;height:338px;background:#f3f3f3;"></div><svg class="a" style="left:732px;top:408px" width="4" height="6" viewBox="0 0 4 6"><path d="M0.5 0.5 L3 3 L0.5 5.5" stroke="#a0a0a0" stroke-width="0.9" fill="none"/></svg><svg class="a" style="left:261px;top:57.5px" width="7" height="9" viewBox="0 0 7 9"><path d="M0.5 0.5 H4.5 L6.5 2.5 V8.5 H0.5 Z" fill="#fffdf7" stroke="#c8a060" stroke-width="0.8"/><text x="1.3" y="7" font-size="5.5" font-family="Liberation Sans" fill="#2a5a9a" font-weight="bold">c</text></svg><div class="t" style="left:270.5px;top:57.5px;font-size:6.3px;color:#111;transform:scaleX(1.0050);transform-origin:0 50%;">hal_entry.c</div><svg class="a" style="left:317.5px;top:57.5px" width="7" height="9" viewBox="0 0 7 9"><path d="M0.5 0.5 H4.5 L6.5 2.5 V8.5 H0.5 Z" fill="#fffdf7" stroke="#c8a060" stroke-width="0.8"/><text x="1.3" y="7" font-size="5.5" font-family="Liberation Sans" fill="#2a5a9a" font-weight="bold">c</text></svg><div class="t" style="left:326.75px;top:57.5px;font-size:6.3px;color:#111;transform:scaleX(1.0245);transform-origin:0 50%;">startup.c</div><div class="a" style="left:365px;top:55px;width:46px;height:13px;background:#0870dc;"></div><div class="a" style="left:365px;top:55px;width:46px;height:1px;background:#0054c8;"></div><svg class="a" style="left:369px;top:58px" width="6" height="8" viewBox="0 0 6 8"><path d="M0.5 0.5 H4 L5.5 2 V7.5 H0.5 Z" fill="#fff" stroke="#f0a040" stroke-width="0.8"/><text x="1.2" y="6.3" font-size="5" font-family="Liberation Sans" fill="#2a5a9a" font-weight="bold">c</text></svg><div class="t" style="left:377px;top:57.3px;font-size:6.5px;color:#fff;transform:scaleX(1.0447);transform-origin:0 50%;">main.c</div><svg class="a" style="left:401px;top:59px" width="6" height="6" viewBox="0 0 6 6"><path d="M0.8 0.8 L5.2 5.2 M5.2 0.8 L0.8 5.2" stroke="#fff" stroke-width="0.9"/></svg><svg class="a" style="left:730px;top:58.5px" width="7" height="4" viewBox="0 0 7 4"><rect x="0.5" y="0.6" width="5.8" height="2.4" rx="1" fill="#fff" stroke="#333" stroke-width="0.85"/></svg><svg class="a" style="left:742.5px;top:58.5px" width="7" height="7" viewBox="0 0 7 7"><rect x="0.6" y="0.6" width="5.4" height="5.6" fill="#fff" stroke="#333" stroke-width="0.85"/><rect x="0.6" y="0.6" width="5.4" height="0.9" fill="#333"/></svg><div class="a" style="left:756px;top:68px;width:268px;height:348px;background:#f0f0f0;"></div><div class="a" style="left:756px;top:68px;width:1px;height:349px;background:#a8a8a8;"></div><div class="a" style="left:756px;top:68px;width:187px;height:1px;background:#a8a8a8;"></div><div class="a" style="left:991px;top:68px;width:33px;height:1px;background:#a8a8a8;"></div><div class="a" style="left:756px;top:416px;width:268px;height:1px;background:#a8a8a8;"></div><svg class="a" style="left:758px;top:58px" width="10" height="8" viewBox="0 0 10 8"><text x="0" y="6" font-size="5" font-family="Liberation Sans" fill="#2a60c0" font-weight="bold">(x)=</text></svg><div class="t" style="left:768.7px;top:57.5px;font-size:6.3px;color:#111;transform:scaleX(1.0068);transform-origin:0 50%;">Variable</div><svg class="a" style="left:797px;top:58px" width="8" height="8" viewBox="0 0 8 8"><circle cx="2.3" cy="2.5" r="1.8" fill="#3a70c8"/><circle cx="5.5" cy="5.5" r="1.8" fill="#3a70c8"/></svg><div class="t" style="left:807.5px;top:57.5px;font-size:6.3px;color:#111;transform:scaleX(0.9419);transform-origin:0 50%;">Breakp</div><svg class="a" style="left:834px;top:57px" width="9" height="9" viewBox="0 0 9 9"><path d="M0.5 2.5 H4 L5 1 H8.5 V8.5 H0.5 Z" fill="#f5d580" stroke="#b08020" stroke-width="0.7"/></svg><div class="t" style="left:845px;top:57.5px;font-size:6.3px;color:#111;transform:scaleX(0.9742);transform-origin:0 50%;">Project</div><svg class="a" style="left:870.5px;top:57px" width="9" height="9" viewBox="0 0 9 9"><text x="0" y="7" font-size="7" font-family="Liberation Sans" fill="#3a70b0">x</text><path d="M5 1 L8 1 M6.5 0 V3" stroke="#3a70b0" stroke-width="0.8"/></svg><div class="t" style="left:881.6px;top:57.5px;font-size:6.3px;color:#111;transform:scaleX(0.9184);transform-origin:0 50%;">Express</div><svg class="a" style="left:909px;top:57px" width="8" height="9" viewBox="0 0 8 9"><rect x="0.5" y="0.5" width="3" height="3" fill="none" stroke="#3a6ab0" stroke-width="0.8"/><rect x="4.5" y="5.5" width="3" height="3" fill="none" stroke="#3a6ab0" stroke-width="0.8"/><path d="M2 3.5 V7 H4.5" stroke="#b08020" stroke-width="0.8" fill="none"/></svg><div class="t" style="left:919px;top:57.5px;font-size:6.3px;color:#111;transform:scaleX(0.9902);transform-origin:0 50%;">Periphe</div><div class="a" style="left:943px;top:56px;width:48px;height:13px;background:#f2f2f2;"></div><div class="a" style="left:943px;top:56px;width:48px;height:1px;background:#0b49c9;"></div><div class="a" style="left:943px;top:56px;width:1px;height:13px;background:#a8a8a8;"></div><div class="a" style="left:990px;top:56px;width:1px;height:13px;background:#a8a8a8;"></div><svg class="a" style="left:948px;top:57px" width="7" height="9" viewBox="0 0 7 9"><rect x="0.5" y="0.5" width="6" height="8" fill="#fff" stroke="#6040b0" stroke-width="0.9"/><path d="M2 2 V7" stroke="#3060c0" stroke-width="0.8"/></svg><div class="t" style="left:956.6px;top:57.5px;font-size:6.3px;color:#111;transform:scaleX(0.9786);transform-origin:0 50%;">IO Regi</div><svg class="a" style="left:980px;top:59px" width="6" height="6" viewBox="0 0 6 6"><path d="M0.8 0.8 L5.2 5.2 M5.2 0.8 L0.8 5.2" stroke="#777" stroke-width="0.8"/></svg><svg class="a" style="left:1000px;top:59px" width="7" height="4" viewBox="0 0 7 4"><rect x="0.5" y="0.6" width="5.8" height="2.4" rx="1" fill="#fff" stroke="#333" stroke-width="0.85"/></svg><svg class="a" style="left:1012px;top:59px" width="7" height="7" viewBox="0 0 7 7"><rect x="0.6" y="0.6" width="5.4" height="5.6" fill="#fff" stroke="#333" stroke-width="0.85"/><rect x="0.6" y="0.6" width="5.4" height="0.9" fill="#333"/></svg><div class="a" style="left:804px;top:69px;width:66px;height:12px;background:#fff;border:1px solid #c8c8c8;box-sizing:border-box;"></div><svg class="a" style="left:865px;top:73px" width="6" height="4" viewBox="0 0 6 4"><path d="M0.5 0.5 L3 3 L5.5 0.5" stroke="#555" stroke-width="0.9" fill="none"/></svg><svg class="a" style="left:874px;top:70px" width="8" height="10" viewBox="0 0 8 10"><path d="M2.5 1 H5.5 V5.5 H7.5 L4 9 L0.5 5.5 H2.5 Z" fill="none" stroke="#a0a0a0" stroke-width="0.8"/></svg><svg class="a" style="left:886px;top:70px" width="8" height="10" viewBox="0 0 8 10"><path d="M2.5 9 H5.5 V4.5 H7.5 L4 1 L0.5 4.5 H2.5 Z" fill="none" stroke="#a0a0a0" stroke-width="0.8"/></svg><svg class="a" style="left:899px;top:71px" width="8" height="8" viewBox="0 0 8 8"><rect x="0.5" y="0.5" width="7" height="7" fill="#dce8f6" stroke="#5a80b8" stroke-width="0.8"/><path d="M1.8 4 H6.2 M4 1.8 V6.2" stroke="#1a3a80" stroke-width="1"/></svg><svg class="a" style="left:911px;top:71px" width="8" height="8" viewBox="0 0 8 8"><rect x="0.5" y="0.5" width="7" height="7" fill="#dce8f6" stroke="#5a80b8" stroke-width="0.8"/><path d="M1.8 4 H6.2" stroke="#1a3a80" stroke-width="1"/></svg><svg class="a" style="left:923px;top:70px" width="9" height="10" viewBox="0 0 9 10"><path d="M1 3 H7 M5 1 L7.5 3 L5 5 M8 7 H2 M4 5 L1.5 7 L4 9" stroke="#1a4ab0" stroke-width="1.2" fill="none"/></svg><svg class="a" style="left:936px;top:70px" width="9" height="10" viewBox="0 0 9 10"><circle cx="4.5" cy="5" r="3.5" fill="#e03030"/><path d="M1 2 Q4.5 -1 8 3" stroke="#3060c0" stroke-width="1" fill="none"/><path d="M3 3.5 L6 6.5 M6 3.5 L3 6.5" stroke="#fff" stroke-width="0.8"/></svg><svg class="a" style="left:948px;top:70px" width="9" height="9" viewBox="0 0 9 9"><path d="M4.5 0.5 L5.7 3.3 L8.6 3.5 L6.3 5.4 L7.1 8.4 L4.5 6.7 L1.9 8.4 L2.7 5.4 L0.4 3.5 L3.3 3.3 Z" fill="#f0c020" stroke="#b08000" stroke-width="0.5"/><circle cx="6.5" cy="6.5" r="1.5" fill="#3060c0"/></svg><svg class="a" style="left:960px;top:70px" width="9" height="9" viewBox="0 0 9 9"><circle cx="3.8" cy="3.8" r="3" fill="#c0d8f0" stroke="#506080" stroke-width="0.9"/><path d="M6 6 L8.5 8.5" stroke="#806040" stroke-width="1.4"/></svg><svg class="a" style="left:971.5px;top:70px" width="10" height="9" viewBox="0 0 10 9"><rect x="0.5" y="3" width="9" height="4" fill="#c8c8c8" stroke="#707070" stroke-width="0.7"/><rect x="2" y="0.5" width="6" height="3" fill="#fff" stroke="#808080" stroke-width="0.6"/><rect x="2" y="6" width="6" height="2.5" fill="#fff" stroke="#808080" stroke-width="0.6"/></svg><svg class="a" style="left:983px;top:70px" width="9" height="9" viewBox="0 0 9 9"><rect x="0.5" y="0.5" width="8" height="8" fill="#f0f0f0" stroke="#707070" stroke-width="0.8"/><rect x="2.5" y="0.5" width="4" height="3" fill="#fff" stroke="#707070" stroke-width="0.6"/></svg><div class="a" style="left:996px;top:70px;width:1px;height:10px;background:#a0a0a0;"></div><svg class="a" style="left:1000.5px;top:70px" width="10" height="10" viewBox="0 0 10 10"><rect x="0.5" y="2.5" width="8" height="7" fill="#fff" stroke="#3a6ab0" stroke-width="0.9"/><rect x="0.5" y="2.5" width="8" height="1.5" fill="#3a6ab0"/><path d="M5 5 L9 1" stroke="#20a030" stroke-width="1.4"/></svg><svg class="a" style="left:1015px;top:70px" width="3" height="9" viewBox="0 0 3 9"><circle cx="1.5" cy="1.5" r="1" fill="none" stroke="#909090" stroke-width="0.7"/><circle cx="1.5" cy="4.5" r="1" fill="none" stroke="#909090" stroke-width="0.7"/><circle cx="1.5" cy="7.5" r="1" fill="none" stroke="#909090" stroke-width="0.7"/></svg><div class="a" style="left:757px;top:81px;width:267px;height:313px;background:#fff;"></div><div class="a" style="left:757px;top:81px;width:255px;height:1px;background:#e4e4e4;"></div><div class="a" style="left:855px;top:82px;width:1px;height:312px;background:#e8e8e8;"></div><div class="a" style="left:916px;top:82px;width:1px;height:312px;background:#e8e8e8;"></div><div class="a" style="left:979px;top:82px;width:1px;height:312px;background:#e8e8e8;"></div><div class="t" style="left:762px;top:84.6px;font-size:6.3px;color:#111;transform:scaleX(1.0116);transform-origin:0 50%;">Name</div><div class="t" style="left:859px;top:84.6px;font-size:6.3px;color:#111;transform:scaleX(0.9758);transform-origin:0 50%;">Value (Hex)</div><div class="t" style="left:920.6px;top:84.6px;font-size:6.3px;color:#111;transform:scaleX(0.9904);transform-origin:0 50%;">Value (Bin)</div><div class="t" style="left:971.5px;top:84.6px;font-size:6.3px;color:#111;">..</div><div class="t" style="left:983px;top:84.6px;font-size:6.3px;color:#111;">Address</div><div class="a" style="left:760px;top:104px;width:252px;height:1px;background:#e8e8e8;"></div><div class="a" style="left:760px;top:114px;width:252px;height:1px;background:#e8e8e8;"></div><div class="a" style="left:760px;top:124px;width:252px;height:1px;background:#e8e8e8;"></div><div class="a" style="left:760px;top:133px;width:252px;height:1px;background:#e8e8e8;"></div><div class="a" style="left:760px;top:143px;width:252px;height:1px;background:#e8e8e8;"></div><div class="a" style="left:760px;top:152px;width:252px;height:1px;background:#e8e8e8;"></div><div class="a" style="left:760px;top:162px;width:252px;height:1px;background:#e8e8e8;"></div><div class="a" style="left:760px;top:172px;width:252px;height:1px;background:#e8e8e8;"></div><div class="a" style="left:760px;top:181px;width:252px;height:1px;background:#e8e8e8;"></div><div class="a" style="left:760px;top:191px;width:252px;height:1px;background:#e8e8e8;"></div><div class="a" style="left:760px;top:201px;width:252px;height:1px;background:#e8e8e8;"></div><div class="a" style="left:760px;top:210px;width:252px;height:1px;background:#e8e8e8;"></div><div class="a" style="left:760px;top:220px;width:252px;height:1px;background:#e8e8e8;"></div><div class="a" style="left:760px;top:229px;width:252px;height:1px;background:#e8e8e8;"></div><div class="a" style="left:760px;top:239px;width:252px;height:1px;background:#e8e8e8;"></div><div class="a" style="left:760px;top:249px;width:252px;height:1px;background:#e8e8e8;"></div><div class="a" style="left:760px;top:258px;width:252px;height:1px;background:#e8e8e8;"></div><div class="a" style="left:760px;top:268px;width:252px;height:1px;background:#e8e8e8;"></div><div class="a" style="left:760px;top:278px;width:252px;height:1px;background:#e8e8e8;"></div><div class="a" style="left:760px;top:287px;width:252px;height:1px;background:#e8e8e8;"></div><div class="a" style="left:760px;top:297px;width:252px;height:1px;background:#e8e8e8;"></div><div class="a" style="left:760px;top:306px;width:252px;height:1px;background:#e8e8e8;"></div><div class="a" style="left:760px;top:316px;width:252px;height:1px;background:#e8e8e8;"></div><div class="a" style="left:760px;top:326px;width:252px;height:1px;background:#e8e8e8;"></div><div class="a" style="left:760px;top:335px;width:252px;height:1px;background:#e8e8e8;"></div><div class="a" style="left:760px;top:345px;width:252px;height:1px;background:#e8e8e8;"></div><div class="a" style="left:760px;top:355px;width:252px;height:1px;background:#e8e8e8;"></div><div class="a" style="left:760px;top:364px;width:252px;height:1px;background:#e8e8e8;"></div><div class="a" style="left:760px;top:374px;width:252px;height:1px;background:#e8e8e8;"></div><div class="a" style="left:760px;top:383px;width:252px;height:1px;background:#e8e8e8;"></div><svg class="a" style="left:763px;top:98.4px" width="4" height="5" viewBox="0 0 4 5"><path d="M0.5 0.5 L3 2.5 L0.5 4.5" stroke="#666" stroke-width="0.8" fill="none"/></svg><div class="t" style="left:780.4px;top:96.0px;font-size:6.3px;color:#111;">ACMPHS0</div><svg class="a" style="left:763px;top:108.02000000000001px" width="4" height="5" viewBox="0 0 4 5"><path d="M0.5 0.5 L3 2.5 L0.5 4.5" stroke="#666" stroke-width="0.8" fill="none"/></svg><div class="t" style="left:780.4px;top:105.62px;font-size:6.3px;color:#111;">ACMPLP</div><svg class="a" style="left:763px;top:117.64px" width="4" height="5" viewBox="0 0 4 5"><path d="M0.5 0.5 L3 2.5 L0.5 4.5" stroke="#666" stroke-width="0.8" fill="none"/></svg><div class="t" style="left:780.4px;top:115.24px;font-size:6.3px;color:#111;">ADC160</div><svg class="a" style="left:763px;top:127.26000000000002px" width="4" height="5" viewBox="0 0 4 5"><path d="M0.5 0.5 L3 2.5 L0.5 4.5" stroke="#666" stroke-width="0.8" fill="none"/></svg><div class="t" style="left:780.4px;top:124.86000000000001px;font-size:6.3px;color:#111;">AGT0</div><svg class="a" style="left:763px;top:136.88px" width="4" height="5" viewBox="0 0 4 5"><path d="M0.5 0.5 L3 2.5 L0.5 4.5" stroke="#666" stroke-width="0.8" fill="none"/></svg><div class="t" style="left:780.4px;top:134.48px;font-size:6.3px;color:#111;">AGT1</div><svg class="a" style="left:763px;top:146.5px" width="4" height="5" viewBox="0 0 4 5"><path d="M0.5 0.5 L3 2.5 L0.5 4.5" stroke="#666" stroke-width="0.8" fill="none"/></svg><div class="t" style="left:780.4px;top:144.1px;font-size:6.3px;color:#111;">BUS</div><svg class="a" style="left:763px;top:156.12px" width="4" height="5" viewBox="0 0 4 5"><path d="M0.5 0.5 L3 2.5 L0.5 4.5" stroke="#666" stroke-width="0.8" fill="none"/></svg><div class="t" style="left:780.4px;top:153.72px;font-size:6.3px;color:#111;">CAC</div><svg class="a" style="left:763px;top:165.73999999999998px" width="4" height="5" viewBox="0 0 4 5"><path d="M0.5 0.5 L3 2.5 L0.5 4.5" stroke="#666" stroke-width="0.8" fill="none"/></svg><div class="t" style="left:780.4px;top:163.33999999999997px;font-size:6.3px;color:#111;">CAN0</div><svg class="a" style="left:763px;top:175.35999999999999px" width="4" height="5" viewBox="0 0 4 5"><path d="M0.5 0.5 L3 2.5 L0.5 4.5" stroke="#666" stroke-width="0.8" fill="none"/></svg><div class="t" style="left:780.4px;top:172.95999999999998px;font-size:6.3px;color:#111;">CRC</div><svg class="a" style="left:763px;top:184.98px" width="4" height="5" viewBox="0 0 4 5"><path d="M0.5 0.5 L3 2.5 L0.5 4.5" stroke="#666" stroke-width="0.8" fill="none"/></svg><div class="t" style="left:780.4px;top:182.57999999999998px;font-size:6.3px;color:#111;">CTSU</div><svg class="a" style="left:763px;top:194.6px" width="4" height="5" viewBox="0 0 4 5"><path d="M0.5 0.5 L3 2.5 L0.5 4.5" stroke="#666" stroke-width="0.8" fill="none"/></svg><div class="t" style="left:780.4px;top:192.2px;font-size:6.3px;color:#111;">DAC12</div><svg class="a" style="left:763px;top:204.22px" width="4" height="5" viewBox="0 0 4 5"><path d="M0.5 0.5 L3 2.5 L0.5 4.5" stroke="#666" stroke-width="0.8" fill="none"/></svg><div class="t" style="left:780.4px;top:201.82px;font-size:6.3px;color:#111;">DAC8</div><svg class="a" style="left:763px;top:213.84px" width="4" height="5" viewBox="0 0 4 5"><path d="M0.5 0.5 L3 2.5 L0.5 4.5" stroke="#666" stroke-width="0.8" fill="none"/></svg><div class="t" style="left:780.4px;top:211.44px;font-size:6.3px;color:#111;">DBG</div><svg class="a" style="left:763px;top:223.46px" width="4" height="5" viewBox="0 0 4 5"><path d="M0.5 0.5 L3 2.5 L0.5 4.5" stroke="#666" stroke-width="0.8" fill="none"/></svg><div class="t" style="left:780.4px;top:221.06px;font-size:6.3px;color:#111;">DOC</div><svg class="a" style="left:763px;top:233.07999999999998px" width="4" height="5" viewBox="0 0 4 5"><path d="M0.5 0.5 L3 2.5 L0.5 4.5" stroke="#666" stroke-width="0.8" fill="none"/></svg><div class="t" style="left:780.4px;top:230.67999999999998px;font-size:6.3px;color:#111;">DTC</div><svg class="a" style="left:763px;top:242.7px" width="4" height="5" viewBox="0 0 4 5"><path d="M0.5 0.5 L3 2.5 L0.5 4.5" stroke="#666" stroke-width="0.8" fill="none"/></svg><div class="t" style="left:780.4px;top:240.29999999999998px;font-size:6.3px;color:#111;">ELC</div><svg class="a" style="left:763px;top:252.32px" width="4" height="5" viewBox="0 0 4 5"><path d="M0.5 0.5 L3 2.5 L0.5 4.5" stroke="#666" stroke-width="0.8" fill="none"/></svg><div class="t" style="left:780.4px;top:249.92px;font-size:6.3px;color:#111;">FCACHE</div><svg class="a" style="left:763px;top:261.93999999999994px" width="4" height="5" viewBox="0 0 4 5"><path d="M0.5 0.5 L3 2.5 L0.5 4.5" stroke="#666" stroke-width="0.8" fill="none"/></svg><div class="t" style="left:780.4px;top:259.53999999999996px;font-size:6.3px;color:#111;">GPT_OPS</div><svg class="a" style="left:763px;top:271.55999999999995px" width="4" height="5" viewBox="0 0 4 5"><path d="M0.5 0.5 L3 2.5 L0.5 4.5" stroke="#666" stroke-width="0.8" fill="none"/></svg><div class="t" style="left:780.4px;top:269.15999999999997px;font-size:6.3px;color:#111;">GPT161</div><svg class="a" style="left:763px;top:281.17999999999995px" width="4" height="5" viewBox="0 0 4 5"><path d="M0.5 0.5 L3 2.5 L0.5 4.5" stroke="#666" stroke-width="0.8" fill="none"/></svg><div class="t" style="left:780.4px;top:278.78px;font-size:6.3px;color:#111;">GPT162</div><svg class="a" style="left:763px;top:290.79999999999995px" width="4" height="5" viewBox="0 0 4 5"><path d="M0.5 0.5 L3 2.5 L0.5 4.5" stroke="#666" stroke-width="0.8" fill="none"/></svg><div class="t" style="left:780.4px;top:288.4px;font-size:6.3px;color:#111;">GPT163</div><svg class="a" style="left:763px;top:300.41999999999996px" width="4" height="5" viewBox="0 0 4 5"><path d="M0.5 0.5 L3 2.5 L0.5 4.5" stroke="#666" stroke-width="0.8" fill="none"/></svg><div class="t" style="left:780.4px;top:298.02px;font-size:6.3px;color:#111;">GPT164</div><svg class="a" style="left:763px;top:310.03999999999996px" width="4" height="5" viewBox="0 0 4 5"><path d="M0.5 0.5 L3 2.5 L0.5 4.5" stroke="#666" stroke-width="0.8" fill="none"/></svg><div class="t" style="left:780.4px;top:307.64px;font-size:6.3px;color:#111;">GPT165</div><svg class="a" style="left:763px;top:319.65999999999997px" width="4" height="5" viewBox="0 0 4 5"><path d="M0.5 0.5 L3 2.5 L0.5 4.5" stroke="#666" stroke-width="0.8" fill="none"/></svg><div class="t" style="left:780.4px;top:317.26px;font-size:6.3px;color:#111;">GPT166</div><svg class="a" style="left:763px;top:329.28px" width="4" height="5" viewBox="0 0 4 5"><path d="M0.5 0.5 L3 2.5 L0.5 4.5" stroke="#666" stroke-width="0.8" fill="none"/></svg><div class="t" style="left:780.4px;top:326.88px;font-size:6.3px;color:#111;">GPT320</div><svg class="a" style="left:763px;top:338.9px" width="4" height="5" viewBox="0 0 4 5"><path d="M0.5 0.5 L3 2.5 L0.5 4.5" stroke="#666" stroke-width="0.8" fill="none"/></svg><div class="t" style="left:780.4px;top:336.5px;font-size:6.3px;color:#111;">ICU</div><svg class="a" style="left:763px;top:348.52px" width="4" height="5" viewBox="0 0 4 5"><path d="M0.5 0.5 L3 2.5 L0.5 4.5" stroke="#666" stroke-width="0.8" fill="none"/></svg><div class="t" style="left:780.4px;top:346.12px;font-size:6.3px;color:#111;">IIC0</div><svg class="a" style="left:763px;top:358.13999999999993px" width="4" height="5" viewBox="0 0 4 5"><path d="M0.5 0.5 L3 2.5 L0.5 4.5" stroke="#666" stroke-width="0.8" fill="none"/></svg><div class="t" style="left:780.4px;top:355.73999999999995px;font-size:6.3px;color:#111;">IIC1</div><svg class="a" style="left:763px;top:367.75999999999993px" width="4" height="5" viewBox="0 0 4 5"><path d="M0.5 0.5 L3 2.5 L0.5 4.5" stroke="#666" stroke-width="0.8" fill="none"/></svg><div class="t" style="left:780.4px;top:365.35999999999996px;font-size:6.3px;color:#111;">IWDT</div><svg class="a" style="left:763px;top:377.37999999999994px" width="4" height="5" viewBox="0 0 4 5"><path d="M0.5 0.5 L3 2.5 L0.5 4.5" stroke="#666" stroke-width="0.8" fill="none"/></svg><div class="t" style="left:780.4px;top:374.97999999999996px;font-size:6.3px;color:#111;">KINT</div><svg class="a" style="left:763px;top:386.99999999999994px" width="4" height="5" viewBox="0 0 4 5"><path d="M0.5 0.5 L3 2.5 L0.5 4.5" stroke="#666" stroke-width="0.8" fill="none"/></svg><div class="t" style="left:780.4px;top:384.59999999999997px;font-size:6.3px;color:#111;">MMF</div><div class="a" style="left:1012px;top:82px;width:10px;height:312px;background:#f0f0f0;"></div><div class="a" style="left:1013px;top:92px;width:8px;height:155px;background:#cdcdcd;"></div><svg class="a" style="left:1014.5px;top:85.5px" width="6" height="4" viewBox="0 0 6 4"><path d="M0.5 3.5 L3 1 L5.5 3.5" stroke="#222" stroke-width="1" fill="none"/></svg><svg class="a" style="left:1014.5px;top:387.5px" width="6" height="4" viewBox="0 0 6 4"><path d="M0.5 0.5 L3 3 L5.5 0.5" stroke="#222" stroke-width="1" fill="none"/></svg><div class="a" style="left:1022px;top:69px;width:1px;height:348px;background:#b8b8b8;"></div><div class="a" style="left:757px;top:394px;width:255px;height:8.5px;background:#f0f0f0;"></div><div class="a" style="left:768.5px;top:395px;width:176px;height:7px;background:#cdcdcd;"></div><svg class="a" style="left:761px;top:395.5px" width="4" height="6" viewBox="0 0 4 6"><path d="M3.5 0.5 L1 3 L3.5 5.5" stroke="#111" stroke-width="1.2" fill="none"/></svg><svg class="a" style="left:1007px;top:395.5px" width="4" height="6" viewBox="0 0 4 6"><path d="M0.5 0.5 L3 3 L0.5 5.5" stroke="#222" stroke-width="0.9" fill="none"/></svg><div class="a" style="left:757px;top:402px;width:267px;height:1px;background:#d8d8d8;"></div><div class="a" style="left:757px;top:403px;width:42px;height:13px;background:#fff;"></div><div class="a" style="left:799px;top:403px;width:1px;height:13px;background:#d0d0d0;"></div><div class="t" style="left:761px;top:406px;font-size:6.3px;color:#111;transform:scaleX(0.9729);transform-origin:0 50%;">All Registers</div><div class="a" style="left:800px;top:403px;width:54px;height:11px;background:#f6f6f6;"></div><div class="a" style="left:853.7px;top:403px;width:1px;height:11px;background:#d0d0d0;"></div><div class="t" style="left:801.5px;top:404.8px;font-size:6.3px;color:#111;transform:scaleX(0.9456);transform-origin:0 50%;">Selected Registers</div><div class="a" style="left:257px;top:432px;width:1px;height:107px;background:#a8a8a8;"></div><div class="a" style="left:257px;top:432px;width:767px;height:1px;background:#9a9a9a;"></div><svg class="a" style="left:260.5px;top:421px" width="7" height="8" viewBox="0 0 7 8"><rect x="0.5" y="0.5" width="6" height="6" rx="1" fill="#fff" stroke="#2a50a8" stroke-width="1"/><path d="M2 3.5 H5" stroke="#2a50a8" stroke-width="0.8"/><path d="M1.5 7.5 H5.5" stroke="#2a50a8" stroke-width="0.8"/></svg><div class="t" style="left:270px;top:420.5px;font-size:6.3px;color:#111;transform:scaleX(1.0167);transform-origin:0 50%;">Console</div><svg class="a" style="left:299px;top:421px" width="10" height="8" viewBox="0 0 10 8"><path d="M1.5 0.5 V7.5 M4.5 0.5 V7.5 M7.5 0.5 V7.5" stroke="#4a80c8" stroke-width="0.9" stroke-dasharray="1 0.8"/><path d="M0.5 3.5 H9" stroke="#4a80c8" stroke-width="0.7"/></svg><div class="t" style="left:309.6px;top:420.5px;font-size:6.3px;color:#111;transform:scaleX(0.9433);transform-origin:0 50%;">Registers</div><svg class="a" style="left:342px;top:420px" width="7" height="10" viewBox="0 0 7 10"><rect x="0.5" y="1" width="6" height="8.5" fill="#fff" stroke="#707070" stroke-width="0.7"/><path d="M2.5 3 V7 Q2.5 8 1.5 8" stroke="#2a60b0" stroke-width="0.9" fill="none"/></svg><div class="t" style="left:350.5px;top:420.5px;font-size:6.3px;color:#111;transform:scaleX(0.9760);transform-origin:0 50%;">Debug Shell</div><svg class="a" style="left:389px;top:420px" width="8" height="10" viewBox="0 0 8 10"><rect x="0.5" y="0.5" width="7" height="9" fill="#fff" stroke="#7090c0" stroke-width="0.7"/><rect x="1.5" y="1.5" width="3" height="3" fill="#e83030"/><rect x="3.5" y="5" width="3" height="3" fill="#f0c030"/></svg><div class="t" style="left:399.6px;top:420.5px;font-size:6.3px;color:#111;transform:scaleX(1.0147);transform-origin:0 50%;">Problems</div><svg class="a" style="left:433px;top:420px" width="8" height="10" viewBox="0 0 8 10"><rect x="0.5" y="0.5" width="6.5" height="6.5" rx="1" fill="#fff" stroke="#2a50a8" stroke-width="1"/><circle cx="6" cy="7.5" r="2" fill="#30a040"/></svg><div class="t" style="left:442.7px;top:420.5px;font-size:6.3px;color:#111;transform:scaleX(0.9956);transform-origin:0 50%;">Debugger Console</div><svg class="a" style="left:500px;top:420px" width="9" height="10" viewBox="0 0 9 10"><circle cx="4" cy="4.5" r="3.6" fill="#5a90d0"/><path d="M1.5 3 Q3 2 4 4 Q5 6 3 7.5" stroke="#60a040" stroke-width="1.2" fill="none"/><circle cx="7" cy="7.5" r="1.5" fill="#f0c040"/></svg><div class="t" style="left:510px;top:420.5px;font-size:6.3px;color:#111;transform:scaleX(0.9963);transform-origin:0 50%;">Smart Browser</div><div class="a" style="left:555px;top:419px;width:50px;height:13px;background:#f4f4f4;"></div><div class="a" style="left:555px;top:419px;width:50px;height:1px;background:#1a5fb4;"></div><div class="a" style="left:555px;top:419px;width:1px;height:13px;background:#a8a8a8;"></div><div class="a" style="left:605px;top:419px;width:1px;height:13px;background:#a8a8a8;"></div><svg class="a" style="left:559px;top:421px" width="6" height="9" viewBox="0 0 6 9"><rect x="0.8" y="0.8" width="4.4" height="7.4" rx="2" fill="#fff" stroke="#2a60c0" stroke-width="1.2"/></svg><div class="t" style="left:566.5px;top:420.5px;font-size:6.3px;color:#111;transform:scaleX(1.1033);transform-origin:0 50%;">Memory</div><svg class="a" style="left:595px;top:422px" width="6" height="6" viewBox="0 0 6 6"><path d="M0.8 0.8 L5.2 5.2 M5.2 0.8 L0.8 5.2" stroke="#777" stroke-width="0.8"/></svg><svg class="a" style="left:843px;top:421px" width="9" height="10" viewBox="0 0 9 10"><path d="M1 4 Q3 0.5 7 2 M8 6 Q6 9.5 2 8" stroke="#e0a020" stroke-width="1.4" fill="none"/><path d="M5 6 L8.5 8 L5 10 Z" fill="#20a030"/></svg><svg class="a" style="left:855px;top:422px" width="9" height="8" viewBox="0 0 9 8"><path d="M0.5 1 V4 M2 1 V4 M3.5 1 V4 M5 1 V4 M6.5 1 V4" stroke="#2a50a0" stroke-width="0.7"/><path d="M5 6.5 H8.5 M7 5 L8.5 6.5 L7 8" stroke="#2a50a0" stroke-width="0.8" fill="none"/></svg><svg class="a" style="left:868px;top:422px" width="9" height="8" viewBox="0 0 9 8"><path d="M2 1 V4 M3.5 1 V4 M5 1 V4 M6.5 1 V4 M8 1 V4" stroke="#2a50a0" stroke-width="0.7"/><path d="M4 6.5 H0.5 M2 5 L0.5 6.5 L2 8" stroke="#2a50a0" stroke-width="0.8" fill="none"/></svg><svg class="a" style="left:880.5px;top:421px" width="9" height="10" viewBox="0 0 9 10"><path d="M1 4 Q3 0.5 7 2 M8 6 Q6 9.5 2 8" stroke="#e0a020" stroke-width="1.4" fill="none"/></svg><svg class="a" style="left:894px;top:421px" width="7" height="9" viewBox="0 0 7 9"><path d="M0.5 0.5 H4.5 L6.5 2.5 V8.5 H0.5 Z" fill="#fff" stroke="#909090" stroke-width="0.7"/></svg><svg class="a" style="left:905px;top:421px" width="9" height="9" viewBox="0 0 9 9"><rect x="0.5" y="2.5" width="8" height="6" fill="#fff" stroke="#3a6ab0" stroke-width="0.9"/><rect x="0.5" y="2.5" width="8" height="1.5" fill="#3a6ab0"/><path d="M5 5 L9 1" stroke="#20a030" stroke-width="1.4"/></svg><div class="a" style="left:917px;top:420px;width:1px;height:11px;background:#a0a0a0;"></div><div class="a" style="left:919px;top:419px;width:13px;height:12px;background:#cce4f7;border:1px solid #99c8ef;box-sizing:border-box;"></div><svg class="a" style="left:920px;top:421px" width="11" height="8" viewBox="0 0 11 8"><path d="M1 4 H5 M3.5 2.5 L5.5 4 L3.5 5.5" stroke="#e0a020" stroke-width="1" fill="none"/><path d="M7.5 1 V7 M9 1 V7" stroke="#d04040" stroke-width="0.7" stroke-dasharray="1 0.6"/></svg><div class="a" style="left:935px;top:420px;width:1px;height:11px;background:#a0a0a0;"></div><svg class="a" style="left:937px;top:420px" width="9" height="10" viewBox="0 0 9 10"><rect x="0.5" y="0.5" width="8" height="6" fill="#fff" stroke="#6080b0" stroke-width="0.8"/><path d="M2 9 Q4.5 7 7 9" stroke="#2a50a0" stroke-width="0.9" fill="none"/></svg><div class="a" style="left:948px;top:419px;width:13px;height:12px;background:#cce4f7;border:1px solid #99c8ef;box-sizing:border-box;"></div><svg class="a" style="left:950px;top:420px" width="9" height="10" viewBox="0 0 9 10"><path d="M1 3 Q4 0 7 3 M8 6 Q5 9 2 6" stroke="#e0a020" stroke-width="1.3" fill="none"/></svg><div class="a" style="left:962px;top:420px;width:1px;height:11px;background:#a0a0a0;"></div><svg class="a" style="left:967px;top:420px" width="9" height="10" viewBox="0 0 9 10"><rect x="0.5" y="0.5" width="4" height="4" fill="#e8a030"/><rect x="3.5" y="4.5" width="5" height="5" fill="#fff" stroke="#3a6ab0" stroke-width="0.8"/></svg><svg class="a" style="left:978px;top:425px" width="5" height="3" viewBox="0 0 5 3"><path d="M0 0 H5 L2.5 3 Z" fill="#222"/></svg><svg class="a" style="left:990px;top:420px" width="3" height="10" viewBox="0 0 3 10"><circle cx="1.5" cy="1.5" r="1" fill="none" stroke="#909090" stroke-width="0.7"/><circle cx="1.5" cy="5" r="1" fill="none" stroke="#909090" stroke-width="0.7"/><circle cx="1.5" cy="8.5" r="1" fill="none" stroke="#909090" stroke-width="0.7"/></svg><svg class="a" style="left:1000px;top:422px" width="7" height="4" viewBox="0 0 7 4"><rect x="0.5" y="0.6" width="5.8" height="2.4" rx="1" fill="#fff" stroke="#333" stroke-width="0.85"/></svg><svg class="a" style="left:1012px;top:422px" width="7" height="7" viewBox="0 0 7 7"><rect x="0.6" y="0.6" width="5.4" height="5.6" fill="#fff" stroke="#333" stroke-width="0.85"/><rect x="0.6" y="0.6" width="5.4" height="0.9" fill="#333"/></svg><div class="a" style="left:258px;top:433px;width:210px;height:106px;background:#fff;"></div><div class="a" style="left:258px;top:433px;width:210px;height:11px;background:#f0f0f0;"></div><div class="a" style="left:258px;top:444px;width:208px;height:1px;background:#a8a8a8;"></div><div class="t" style="left:258.5px;top:431.8px;font-size:6.3px;color:#111;transform:scaleX(1.0639);transform-origin:0 50%;">Monitors</div><svg class="a" style="left:431px;top:435px" width="8" height="8" viewBox="0 0 8 8"><path d="M2.7 0.5 H5.3 V2.7 H7.5 V5.3 H5.3 V7.5 H2.7 V5.3 H0.5 V2.7 H2.7 Z" fill="#a8d840" stroke="#5a9a10" stroke-width="0.6"/></svg><svg class="a" style="left:444px;top:435px" width="7" height="7" viewBox="0 0 7 7"><path d="M1 1 L6 6 M6 1 L1 6" stroke="#404040" stroke-width="1.5"/></svg><svg class="a" style="left:456.5px;top:434px" width="8" height="9" viewBox="0 0 8 9"><path d="M1 1 L7 7 M7 1 L1 7" stroke="#505050" stroke-width="1.3"/><path d="M0.5 4 H7.5 M4 0.5 V7.5" stroke="#707070" stroke-width="0.6"/></svg><div class="a" style="left:267px;top:465px;width:35px;height:9.5px;background:#d9d9d9;"></div><svg class="a" style="left:270px;top:446.7px" width="6" height="6" viewBox="0 0 6 6"><path d="M3 0.2 L5.8 3 L3 5.8 L0.2 3 Z" fill="#2f66b8"/><path d="M3 0.8 L4.6 2.4 L3 3 L1.4 2.4 Z" fill="#8ab8ec"/></svg><div class="t" style="left:280.7px;top:445.2px;font-size:6.3px;color:#111;">0x43C</div><svg class="a" style="left:270px;top:456.7px" width="6" height="6" viewBox="0 0 6 6"><path d="M3 0.2 L5.8 3 L3 5.8 L0.2 3 Z" fill="#2f66b8"/><path d="M3 0.8 L4.6 2.4 L3 3 L1.4 2.4 Z" fill="#8ab8ec"/></svg><div class="t" style="left:280.7px;top:455.2px;font-size:6.3px;color:#111;">0x2000</div><svg class="a" style="left:270px;top:466.5px" width="6" height="6" viewBox="0 0 6 6"><path d="M3 0.2 L5.8 3 L3 5.8 L0.2 3 Z" fill="#2f66b8"/><path d="M3 0.8 L4.6 2.4 L3 3 L1.4 2.4 Z" fill="#8ab8ec"/></svg><div class="t" style="left:280.7px;top:465.0px;font-size:6.3px;color:#111;">0x7000</div><div class="a" style="left:468px;top:433px;width:556px;height:106px;background:#fff;"></div><div class="a" style="left:468px;top:433px;width:556px;height:10px;background:#f0f0f0;"></div><div class="a" style="left:468px;top:432px;width:1px;height:107px;background:#6a6a6a;"></div><div class="a" style="left:468px;top:442.5px;width:556px;height:1px;background:#6a6a6a;"></div><div class="a" style="left:468px;top:538px;width:556px;height:1px;background:#6a6a6a;"></div><div class="a" style="left:469px;top:433px;width:100px;height:10px;background:#0870dc;"></div><div class="t" style="left:470px;top:433.2px;font-size:6.3px;color:#0a1030;transform:scaleX(0.9631);transform-origin:0 50%;">0x7000 : 0x7000 &lt;Hex Integer&gt;</div><svg class="a" style="left:560.5px;top:435px" width="6" height="6" viewBox="0 0 6 6"><path d="M0.8 0.8 L5.2 5.2 M5.2 0.8 L0.8 5.2" stroke="#1a2a50" stroke-width="0.8"/></svg><div class="a" style="left:569.5px;top:433px;width:65px;height:10px;background:#f7f7f7;"></div><div class="a" style="left:634.5px;top:433px;width:1px;height:10px;background:#c8c8c8;"></div><svg class="a" style="left:572px;top:434px" width="8" height="8" viewBox="0 0 8 8"><path d="M2.7 0.5 H5.3 V2.7 H7.5 V5.3 H5.3 V7.5 H2.7 V5.3 H0.5 V2.7 H2.7 Z" fill="#8ac830" stroke="#5a9a10" stroke-width="0.6"/></svg><div class="t" style="left:583px;top:433.2px;font-size:6.3px;color:#111;transform:scaleX(0.9649);transform-origin:0 50%;">New Renderings...</div><div class="t" style="left:473px;top:445.9px;font-size:6.3px;color:#111;">Address</div><div class="a" style="left:538px;top:443px;width:1px;height:95px;background:#eef0f4;"></div><div class="a" style="left:582px;top:443px;width:1px;height:95px;background:#eef0f4;"></div><div class="a" style="left:626px;top:443px;width:1px;height:95px;background:#eef0f4;"></div><div class="a" style="left:670px;top:443px;width:1px;height:95px;background:#eef0f4;"></div><div class="a" style="left:713px;top:443px;width:1px;height:95px;background:#eef0f4;"></div><div class="t" style="left:542px;top:445.9px;font-size:6.3px;color:#111;">0 - 3</div><div class="t" style="left:585.4px;top:445.9px;font-size:6.3px;color:#111;">4 - 7</div><div class="t" style="left:629px;top:445.9px;font-size:6.3px;color:#111;">8 - B</div><div class="t" style="left:673px;top:445.9px;font-size:6.3px;color:#111;">C - F</div><div class="t" style="left:476.7px;top:457.9px;font-size:6.5px;color:#111;transform:scaleX(0.8905);transform-origin:0 50%;">0000000000007000</div><div class="a" style="left:539px;top:457.7px;width:43px;height:9px;background:#0870dc;"></div><div class="t" style="left:547.8px;top:457.9px;font-size:6.8px;color:#fff;transform:scaleX(0.7524);transform-origin:0 50%;">FFFFFFFF</div><div class="t" style="left:591px;top:457.9px;font-size:6.8px;color:#111;transform:scaleX(0.7524);transform-origin:0 50%;">FFFFFFFF</div><div class="t" style="left:635px;top:457.9px;font-size:6.8px;color:#111;transform:scaleX(0.7524);transform-origin:0 50%;">FFFFFFFF</div><div class="t" style="left:678.6px;top:457.9px;font-size:6.8px;color:#111;transform:scaleX(0.7524);transform-origin:0 50%;">FFFFFFFF</div><div class="a" style="left:470px;top:467px;width:542px;height:1px;background:#ececec;"></div><div class="t" style="left:476.7px;top:467.97999999999996px;font-size:6.5px;color:#111;transform:scaleX(0.8905);transform-origin:0 50%;">0000000000007010</div><div class="t" style="left:547.8px;top:467.97999999999996px;font-size:6.8px;color:#111;transform:scaleX(0.7524);transform-origin:0 50%;">FFFFFFFF</div><div class="t" style="left:591px;top:467.97999999999996px;font-size:6.8px;color:#111;transform:scaleX(0.7524);transform-origin:0 50%;">FFFFFFFF</div><div class="t" style="left:635px;top:467.97999999999996px;font-size:6.8px;color:#111;transform:scaleX(0.7524);transform-origin:0 50%;">FFFFFFFF</div><div class="t" style="left:678.6px;top:467.97999999999996px;font-size:6.8px;color:#111;transform:scaleX(0.7524);transform-origin:0 50%;">FFFFFFFF</div><div class="a" style="left:470px;top:477px;width:542px;height:1px;background:#ececec;"></div><div class="t" style="left:476.7px;top:478.06px;font-size:6.5px;color:#111;transform:scaleX(0.8905);transform-origin:0 50%;">0000000000007020</div><div class="t" style="left:547.8px;top:478.06px;font-size:6.8px;color:#111;transform:scaleX(0.7524);transform-origin:0 50%;">FFFFFFFF</div><div class="t" style="left:591px;top:478.06px;font-size:6.8px;color:#111;transform:scaleX(0.7524);transform-origin:0 50%;">FFFFFFFF</div><div class="t" style="left:635px;top:478.06px;font-size:6.8px;color:#111;transform:scaleX(0.7524);transform-origin:0 50%;">FFFFFFFF</div><div class="t" style="left:678.6px;top:478.06px;font-size:6.8px;color:#111;transform:scaleX(0.7524);transform-origin:0 50%;">FFFFFFFF</div><div class="a" style="left:470px;top:487px;width:542px;height:1px;background:#ececec;"></div><div class="t" style="left:476.7px;top:488.14px;font-size:6.5px;color:#111;transform:scaleX(0.8905);transform-origin:0 50%;">0000000000007030</div><div class="t" style="left:547.8px;top:488.14px;font-size:6.8px;color:#111;transform:scaleX(0.7524);transform-origin:0 50%;">FFFFFFFF</div><div class="t" style="left:591px;top:488.14px;font-size:6.8px;color:#111;transform:scaleX(0.7524);transform-origin:0 50%;">FFFFFFFF</div><div class="t" style="left:635px;top:488.14px;font-size:6.8px;color:#111;transform:scaleX(0.7524);transform-origin:0 50%;">FFFFFFFF</div><div class="t" style="left:678.6px;top:488.14px;font-size:6.8px;color:#111;transform:scaleX(0.7524);transform-origin:0 50%;">FFFFFFFF</div><div class="a" style="left:470px;top:497px;width:542px;height:1px;background:#ececec;"></div><div class="t" style="left:476.7px;top:498.21999999999997px;font-size:6.5px;color:#111;transform:scaleX(0.8905);transform-origin:0 50%;">0000000000007040</div><div class="t" style="left:547.8px;top:498.21999999999997px;font-size:6.8px;color:#111;transform:scaleX(0.7524);transform-origin:0 50%;">FFFFFFFF</div><div class="t" style="left:591px;top:498.21999999999997px;font-size:6.8px;color:#111;transform:scaleX(0.7524);transform-origin:0 50%;">FFFFFFFF</div><div class="t" style="left:635px;top:498.21999999999997px;font-size:6.8px;color:#111;transform:scaleX(0.7524);transform-origin:0 50%;">FFFFFFFF</div><div class="t" style="left:678.6px;top:498.21999999999997px;font-size:6.8px;color:#111;transform:scaleX(0.7524);transform-origin:0 50%;">FFFFFFFF</div><div class="a" style="left:470px;top:507px;width:542px;height:1px;background:#ececec;"></div><div class="t" style="left:476.7px;top:508.29999999999995px;font-size:6.5px;color:#111;transform:scaleX(0.8905);transform-origin:0 50%;">0000000000007050</div><div class="t" style="left:547.8px;top:508.29999999999995px;font-size:6.8px;color:#111;transform:scaleX(0.7524);transform-origin:0 50%;">FFFFFFFF</div><div class="t" style="left:591px;top:508.29999999999995px;font-size:6.8px;color:#111;transform:scaleX(0.7524);transform-origin:0 50%;">FFFFFFFF</div><div class="t" style="left:635px;top:508.29999999999995px;font-size:6.8px;color:#111;transform:scaleX(0.7524);transform-origin:0 50%;">FFFFFFFF</div><div class="t" style="left:678.6px;top:508.29999999999995px;font-size:6.8px;color:#111;transform:scaleX(0.7524);transform-origin:0 50%;">FFFFFFFF</div><div class="a" style="left:470px;top:517px;width:542px;height:1px;background:#ececec;"></div><div class="t" style="left:476.7px;top:518.38px;font-size:6.5px;color:#111;transform:scaleX(0.8905);transform-origin:0 50%;">0000000000007060</div><div class="t" style="left:547.8px;top:518.38px;font-size:6.8px;color:#111;transform:scaleX(0.7524);transform-origin:0 50%;">FFFFFFFF</div><div class="t" style="left:591px;top:518.38px;font-size:6.8px;color:#111;transform:scaleX(0.7524);transform-origin:0 50%;">FFFFFFFF</div><div class="t" style="left:635px;top:518.38px;font-size:6.8px;color:#111;transform:scaleX(0.7524);transform-origin:0 50%;">FFFFFFFF</div><div class="t" style="left:678.6px;top:518.38px;font-size:6.8px;color:#111;transform:scaleX(0.7524);transform-origin:0 50%;">FFFFFFFF</div><div class="a" style="left:470px;top:527px;width:542px;height:1px;background:#ececec;"></div><div class="t" style="left:476.7px;top:528.46px;font-size:6.5px;color:#111;transform:scaleX(0.8905);transform-origin:0 50%;">0000000000007070</div><div class="t" style="left:547.8px;top:528.46px;font-size:6.8px;color:#111;transform:scaleX(0.7524);transform-origin:0 50%;">FFFFFFFF</div><div class="t" style="left:591px;top:528.46px;font-size:6.8px;color:#111;transform:scaleX(0.7524);transform-origin:0 50%;">FFFFFFFF</div><div class="t" style="left:635px;top:528.46px;font-size:6.8px;color:#111;transform:scaleX(0.7524);transform-origin:0 50%;">FFFFFFFF</div><div class="t" style="left:678.6px;top:528.46px;font-size:6.8px;color:#111;transform:scaleX(0.7524);transform-origin:0 50%;">FFFFFFFF</div><div class="a" style="left:1013px;top:443.5px;width:9px;height:94px;background:#f0f0f0;"></div><div class="a" style="left:1013.5px;top:484.5px;width:8px;height:11.5px;background:#cdcdcd;"></div><div class="a" style="left:1022px;top:443px;width:1px;height:96px;background:#b8b8b8;"></div><svg class="a" style="left:1016px;top:447px" width="6" height="4" viewBox="0 0 6 4"><path d="M0.5 3.5 L3 1 L5.5 3.5" stroke="#222" stroke-width="0.9" fill="none"/></svg><svg class="a" style="left:1016px;top:531px" width="6" height="4" viewBox="0 0 6 4"><path d="M0.5 0.5 L3 3 L5.5 0.5" stroke="#222" stroke-width="0.9" fill="none"/></svg><div class="a" style="left:257px;top:539px;width:767px;height:1px;background:#a8a8a8;"></div><div class="a" style="left:0px;top:540px;width:1024px;height:14px;background:#f0f0f0;"></div><div class="a" style="left:0px;top:539px;width:256px;height:1px;background:#a8a8a8;"></div><div class="a" style="left:257px;top:539px;width:767px;height:1px;background:#a8a8a8;"></div><div class="a" style="left:0px;top:541px;width:150px;height:10px;background:#007a00;"></div><div class="t" style="left:13.7px;top:541px;font-size:6.3px;color:#fff;transform:scaleX(0.9801);transform-origin:0 50%;">Running</div><svg class="a" style="left:153px;top:543px" width="8" height="7" viewBox="0 0 8 7"><path d="M0.5 2 H4 V0.3 L7.5 3.5 L4 6.7 V5 H0.5 Z" fill="#f0b010"/></svg><svg class="a" style="left:166.5px;top:545px" width="40" height="2" viewBox="0 0 40 2"><line x1="0" y1="1" x2="40" y2="1" stroke="#8a8a8a" stroke-width="1" stroke-dasharray="1.6 0.9"/></svg><svg class="a" style="left:252px;top:541px" width="9" height="9" viewBox="0 0 9 9"><circle cx="4.5" cy="4.5" r="3.7" fill="#fff" stroke="#111" stroke-width="1.1"/><path d="M2.5 6.5 L6.5 2.5" stroke="#111" stroke-width="0.9"/></svg><svg class="a" style="left:267px;top:545px" width="40" height="2" viewBox="0 0 40 2"><line x1="0" y1="1" x2="40" y2="1" stroke="#8a8a8a" stroke-width="1" stroke-dasharray="1.6 0.9"/></svg><svg class="a" style="left:333px;top:541px" width="9" height="9" viewBox="0 0 9 9"><circle cx="4.5" cy="4.5" r="4" fill="#4a90e0"/><circle cx="4.5" cy="4.5" r="2.5" fill="#8ac0f4"/><path d="M4.5 3.5 V7" stroke="#fff" stroke-width="1"/></svg><svg class="a" style="left:347px;top:545px" width="40" height="2" viewBox="0 0 40 2"><line x1="0" y1="1" x2="40" y2="1" stroke="#8a8a8a" stroke-width="1" stroke-dasharray="1.6 0.9"/></svg><div class="a" style="left:665px;top:541px;width:1px;height:12px;background:#d0d0d0;"></div><div class="t" style="left:669px;top:540.6px;font-size:6.3px;color:#111;transform:scaleX(1.0222);transform-origin:0 50%;">Writable</div><div class="a" style="left:735.5px;top:541px;width:1px;height:12px;background:#d0d0d0;"></div><div class="t" style="left:740.6px;top:540.6px;font-size:6.3px;color:#111;transform:scaleX(0.9969);transform-origin:0 50%;">Smart Insert</div><div class="a" style="left:804.6px;top:541px;width:1px;height:12px;background:#d0d0d0;"></div><div class="t" style="left:809px;top:540.6px;font-size:6.3px;color:#111;transform:scaleX(0.9137);transform-origin:0 50%;">8 : 1 : 127</div><svg class="a" style="left:872px;top:541px" width="1" height="12" viewBox="0 0 1 12"><line x1="0.5" y1="0" x2="0.5" y2="12" stroke="#b0b0b0" stroke-width="1" stroke-dasharray="1 1"/></svg>
</body></html>
